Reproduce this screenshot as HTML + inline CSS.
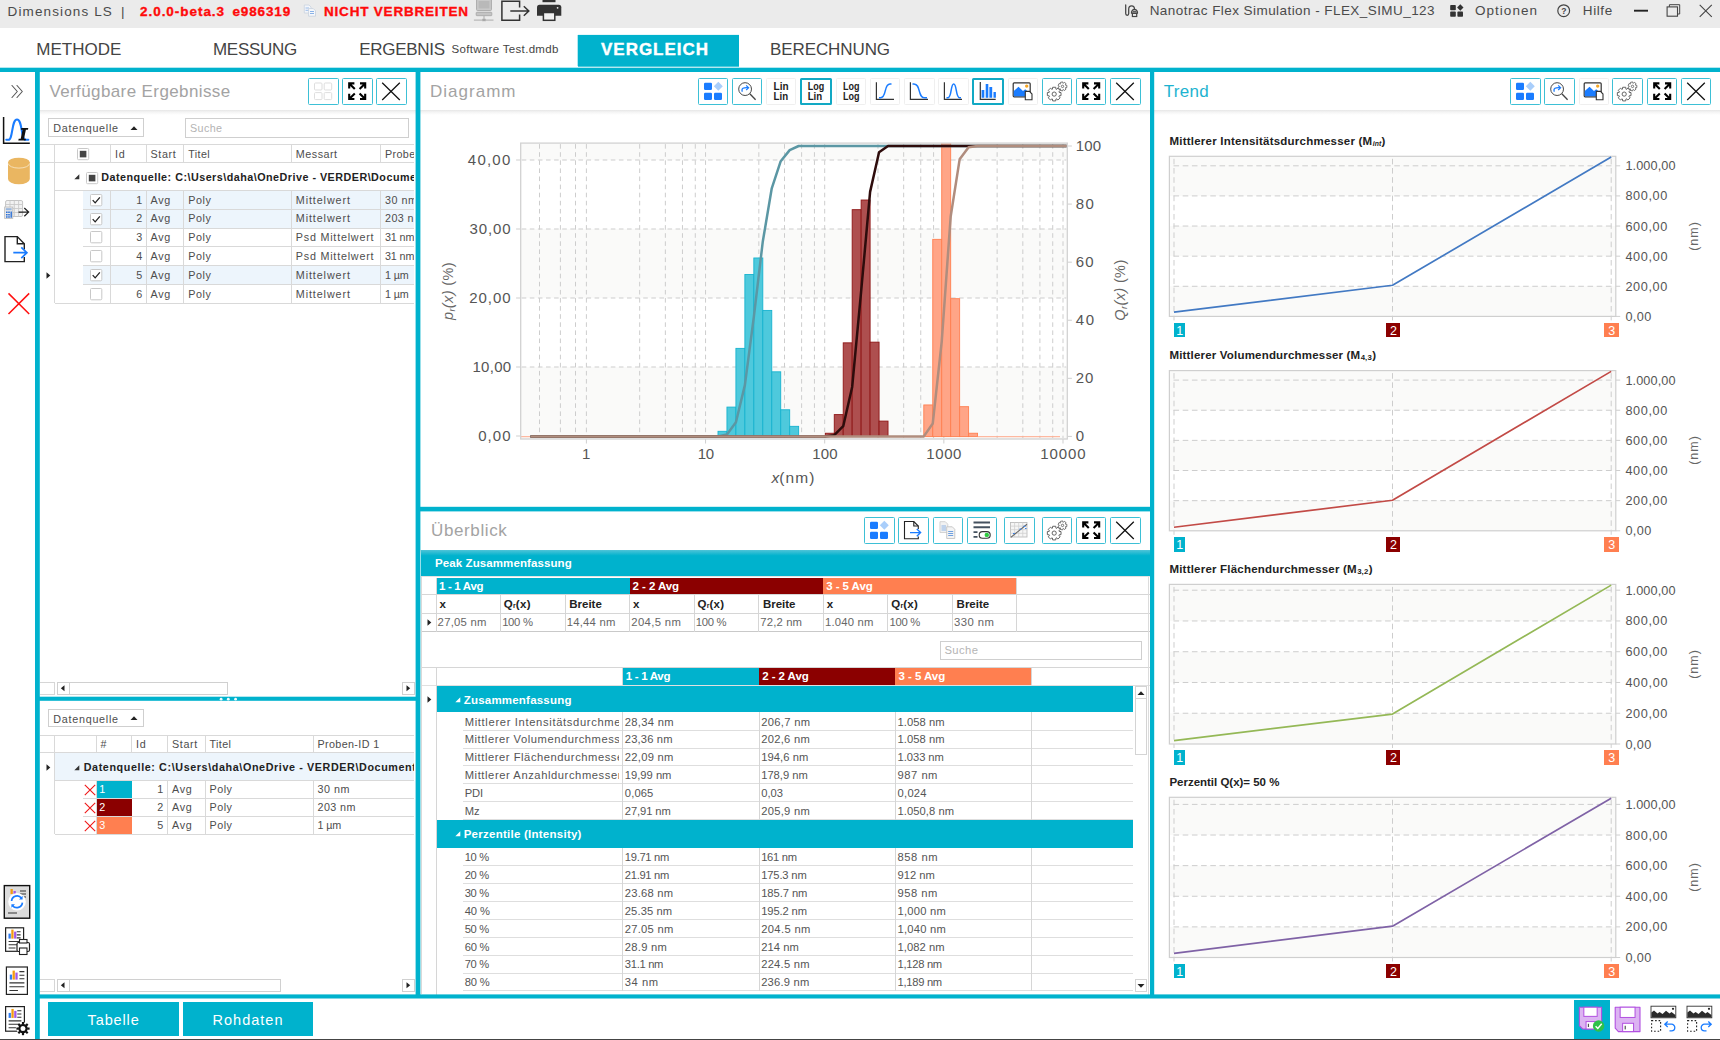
<!DOCTYPE html>
<html lang="de"><head><meta charset="utf-8"><title>Dimensions LS</title><style>
html,body{margin:0;padding:0;background:#fff;}
body{width:1720px;height:1040px;position:relative;overflow:hidden;font-family:"Liberation Sans",sans-serif;}
#app div,#app svg,#app span{position:absolute;box-sizing:border-box;}
#app .t{white-space:pre;line-height:0;}
#app svg{overflow:visible;}
#app svg text{font-family:"Liberation Sans",sans-serif;}
</style></head><body><div id="app" style="position:absolute;left:0;top:0;width:1720px;height:1040px;overflow:hidden">
<div style="left:0.00px;top:0.00px;width:1720.00px;height:28.00px;background:#ebebeb;"></div>
<span class="t" style="left:7.50px;top:12.00px;font-size:13.5px;color:#4a4a4a;letter-spacing:1.132px;">Dimensions LS</span>
<span class="t" style="left:121.00px;top:12.00px;font-size:13.5px;color:#4a4a4a;">|</span>
<span class="t" style="left:140.00px;top:12.00px;font-size:13.5px;color:#ff0a0a;letter-spacing:0.956px;font-weight:bold;-webkit-text-stroke:0.35px #ff0a0a;">2.0.0-beta.3</span>
<span class="t" style="left:232.50px;top:12.00px;font-size:13.5px;color:#ff0a0a;letter-spacing:0.850px;font-weight:bold;-webkit-text-stroke:0.35px #ff0a0a;">e986319</span>
<span class="t" style="left:324.00px;top:12.00px;font-size:13.5px;color:#ff0a0a;letter-spacing:0.799px;font-weight:bold;-webkit-text-stroke:0.35px #ff0a0a;">NICHT VERBREITEN</span>
<span class="t" style="left:1149.70px;top:11.00px;font-size:13.5px;color:#4a4a4a;letter-spacing:0.436px;">Nanotrac Flex Simulation - FLEX_SIMU_123</span>
<span class="t" style="left:1475.00px;top:11.00px;font-size:13.5px;color:#4a4a4a;letter-spacing:1.027px;">Optionen</span>
<span class="t" style="left:1582.80px;top:11.00px;font-size:13.5px;color:#4a4a4a;letter-spacing:0.599px;">Hilfe</span>
<div style="left:0.00px;top:28.00px;width:1720.00px;height:40.00px;background:#fff;"></div>
<div style="left:578px;top:35px;width:161px;height:31px;background:#00b2cd;"></div>
<div style="left:577px;top:35px;width:1px;height:31px;background:#00b2cd;opacity:0.30;"></div>
<div style="left:578px;top:34px;width:161px;height:1px;background:#00b2cd;opacity:0.10;"></div>
<div style="left:578px;top:66px;width:161px;height:1px;background:#00b2cd;opacity:0.70;"></div>
<span class="t" style="left:36.25px;top:50.00px;font-size:17px;color:#444;">METHODE</span>
<span class="t" style="left:213.00px;top:50.00px;font-size:17px;color:#444;letter-spacing:-0.300px;">MESSUNG</span>
<span class="t" style="left:359.25px;top:50.00px;font-size:17px;color:#444;letter-spacing:-0.300px;">ERGEBNIS</span>
<span class="t" style="left:451.50px;top:49.00px;font-size:11.5px;color:#444;letter-spacing:0.321px;">Software Test.dmdb</span>
<span class="t" style="left:601.00px;top:50.00px;font-size:17px;color:#fff;letter-spacing:0.980px;font-weight:bold;-webkit-text-stroke:0.4px #fff;">VERGLEICH</span>
<span class="t" style="left:770.00px;top:50.00px;font-size:17px;color:#444;letter-spacing:-0.090px;">BERECHNUNG</span>
<div style="left:0.00px;top:1039.00px;width:1720.00px;height:1.00px;background:#444;"></div>
<span class="t" style="left:49.40px;top:92.00px;font-size:17px;color:#a3a3a3;letter-spacing:0.394px;">Verfügbare Ergebnisse</span>
<div style="left:40.00px;top:110.20px;width:376.00px;height:5.00px;background:linear-gradient(#e6e6e6,#f4f4f4 40%,#fff);"></div>
<span class="t" style="left:430.00px;top:92.00px;font-size:17px;color:#a3a3a3;letter-spacing:1.013px;">Diagramm</span>
<div style="left:420.30px;top:110.20px;width:729.70px;height:5.00px;background:linear-gradient(#e6e6e6,#f4f4f4 40%,#fff);"></div>
<span class="t" style="left:1163.70px;top:92.00px;font-size:17px;color:#1db3d0;letter-spacing:0.305px;">Trend</span>
<div style="left:1154.20px;top:110.20px;width:565.80px;height:5.00px;background:linear-gradient(#e6e6e6,#f4f4f4 40%,#fff);"></div>
<span class="t" style="left:431.00px;top:531.00px;font-size:17px;color:#a3a3a3;letter-spacing:0.627px;">Überblick</span>
<div style="left:420.30px;top:549.60px;width:729.70px;height:5.00px;background:linear-gradient(#e6e6e6,#f4f4f4 40%,#fff);"></div>
<svg style="left:0.00px;top:76.00px;" width="36" height="250" viewBox="0 0 36 250">
<g fill="none" stroke="#555" stroke-width="1.1" stroke-linecap="round" stroke-linejoin="round">
<path d="M12 9.5 L17.3 15.5 L12 21.5"/><path d="M17 9.5 L22.3 15.5 L17 21.5"/>
</g>
<!-- chart icon -->
<path d="M3.6 41 V67.2 H29.8" fill="none" stroke="#111" stroke-width="1.5"/>
<path d="M6.3 63.7 H8.5 C13 63.7 11.5 43.5 17 43.5 C22.5 43.5 21 63.7 25.5 63.7 H28.3" fill="none" stroke="#1a7cff" stroke-width="2.1" stroke-linecap="round"/>
<path d="M21.3 52 h7 l-0.4 1.8 h-2 l-1.9 9 h2 l-0.4 1.8 h-7.3 l0.4 -1.8 h2 l1.9 -9 h-1.7 z" fill="#111"/>
<!-- cylinder -->
<path d="M8 86.5 V103 A10.9 5.2 0 0 0 29.8 103 V86.5 Z" fill="#eab661"/>
<ellipse cx="18.9" cy="86.5" rx="10.9" ry="4.8" fill="#eab661"/>
<path d="M8.3 87.5 A10.6 4.6 0 0 0 29.5 87.5" fill="none" stroke="#f6e3c0" stroke-width="0.9"/>
<!-- table export -->
<g stroke="#c4c4c4" stroke-width="1" fill="#f2f2f2"><rect x="5.6" y="124.5" width="17" height="16" rx="1.5"/></g>
<path d="M5.6 128.5 h17 M5.6 132.5 h17 M5.6 136.5 h17 M10 124.5 v16 M14.3 124.5 v16 M18.6 124.5 v16" stroke="#c9c9c9" stroke-width="0.9" fill="none"/>
<rect x="4.6" y="131" width="8.2" height="11.5" fill="#e8e8e8" stroke="#bdbdbd" stroke-width="0.8"/>
<path d="M6 135.5 h1.6 v1.6 h-1.6z M8.2 135.5 h1.6 v1.6 h-1.6z M6 138 h1.6 v1.6 h-1.6z M8.2 138 h1.6 v1.6 h-1.6z M6 140.3 h1.6 v1.4 h-1.6z M8.2 140.3 h1.6 v1.4 h-1.6z M10.5 135.5 h1.4 v6.2 h-1.4z" fill="#2a6fd6"/>
<rect x="5.8" y="132.2" width="5.8" height="2" fill="#9bb7dd"/>
<path d="M18.5 136.1 H28.3 M24.3 132 L28.6 136.1 L24.3 140.2" fill="none" stroke="#222" stroke-width="1.3"/>
<!-- doc arrow -->
<path d="M24.3 173.5 V167.8 L17.3 160.6 H5 V185.6 H24.3 V181" fill="none" stroke="#222" stroke-width="1.4"/>
<path d="M17.3 160.6 V167.8 H24.3" fill="none" stroke="#222" stroke-width="1.4"/>
<path d="M13.3 176.7 H26.6 M21.3 171.3 L26.9 176.7 L21.3 182.1" fill="none" stroke="#1a7cff" stroke-width="1.7"/>
<!-- red X -->
<path d="M8.5 217.4 L29.2 238 M29.2 217.4 L8.5 238" stroke="#ff1010" stroke-width="1.5" fill="none"/>
</svg>
<svg style="left:0.00px;top:880.00px;" width="36" height="160" viewBox="0 0 36 160"><rect x="4.3" y="5.6" width="25.4" height="32.6" fill="#dcdcdc" stroke="#111" stroke-width="1.4"/><rect x="10.5" y="9" width="2.3" height="5" fill="#f39c12"/><rect x="13.5" y="11" width="2.3" height="3" fill="#a259e6"/><path d="M20 11 H26 M20 14 H26 M20 17 H26 M8 33 H17" stroke="#333" stroke-width="1.1"/><circle cx="17" cy="21.8" r="8.8" fill="#fff"/><path d="M11.6 21 A5.5 5.5 0 0 1 21.5 18.2 M22.4 22.6 A5.5 5.5 0 0 1 12.5 25.4" fill="none" stroke="#1a7cff" stroke-width="1.7"/><path d="M22.6 15.8 v3.6 h-3.6 z M11.4 27.8 v-3.6 h3.6 z" fill="#1a7cff"/><rect x="5.6" y="47.8" width="18" height="23.5" fill="#fff" stroke="#222" stroke-width="1.2"/><rect x="8.48" y="53.61" width="2.3" height="5" fill="#2f7df6"/><rect x="11.280000000000001" y="49.61" width="2.3" height="9" fill="#f39c12"/><rect x="14.08" y="51.61" width="2.3" height="7" fill="#a259e6"/><path d="M16.759999999999998 51.794999999999995 H20.6 M16.759999999999998 54.849999999999994 H20.6 M16.759999999999998 57.905 H20.6 M8.6 61.42999999999999 H20.6 M8.6 64.72 H20.6 M8.6 68.00999999999999 H15.5" stroke="#333" stroke-width="1.1" fill="none"/><rect x="17" y="62.5" width="12.5" height="9" rx="1.5" fill="#fff" stroke="#222" stroke-width="1.2"/><rect x="19.5" y="59.5" width="7.5" height="3.5" fill="#fff" stroke="#222" stroke-width="1.1"/><rect x="19.5" y="68" width="7.5" height="6.5" fill="#fff" stroke="#222" stroke-width="1.1"/><rect x="6.4" y="87" width="21" height="27.4" fill="#fff" stroke="#222" stroke-width="1.2"/><rect x="9.76" y="94.604" width="2.3" height="5" fill="#2f7df6"/><rect x="12.559999999999999" y="90.604" width="2.3" height="9" fill="#f39c12"/><rect x="15.36" y="92.604" width="2.3" height="7" fill="#a259e6"/><path d="M19.42 91.658 H24.4 M19.42 95.22 H24.4 M19.42 98.782 H24.4 M9.4 102.892 H24.4 M9.4 106.728 H24.4 M9.4 110.564 H17.950000000000003" stroke="#333" stroke-width="1.1" fill="none"/><rect x="5.6" y="126.6" width="18.8" height="24.6" fill="#fff" stroke="#222" stroke-width="1.2"/><rect x="8.608" y="132.916" width="2.3" height="5" fill="#2f7df6"/><rect x="11.408000000000001" y="128.916" width="2.3" height="9" fill="#f39c12"/><rect x="14.208" y="130.916" width="2.3" height="7" fill="#a259e6"/><path d="M17.256 130.78199999999998 H21.4 M17.256 133.98 H21.4 M17.256 137.178 H21.4 M8.6 140.868 H21.4 M8.6 144.31199999999998 H21.4 M8.6 147.756 H15.940000000000001" stroke="#333" stroke-width="1.1" fill="none"/><circle cx="23" cy="148.6" r="6.4" fill="#fff"/><circle cx="23" cy="148.6" r="3.6" fill="none" stroke="#111" stroke-width="2.2"/><path d="M27.20 148.60 L29.60 148.60" stroke="#111" stroke-width="2.2"/><path d="M25.97 151.57 L27.67 153.27" stroke="#111" stroke-width="2.2"/><path d="M23.00 152.80 L23.00 155.20" stroke="#111" stroke-width="2.2"/><path d="M20.03 151.57 L18.33 153.27" stroke="#111" stroke-width="2.2"/><path d="M18.80 148.60 L16.40 148.60" stroke="#111" stroke-width="2.2"/><path d="M20.03 145.63 L18.33 143.93" stroke="#111" stroke-width="2.2"/><path d="M23.00 144.40 L23.00 142.00" stroke="#111" stroke-width="2.2"/><path d="M25.97 145.63 L27.67 143.93" stroke="#111" stroke-width="2.2"/></svg>
<div style="left:48.00px;top:118.00px;width:95.80px;height:19.40px;background:#fff;border:1px solid #cfcfcf;"></div>
<span class="t" style="left:53.30px;top:128.00px;font-size:10.75px;color:#4d4d4d;letter-spacing:0.739px;">Datenquelle</span>
<svg style="left:130.30px;top:124.70px;" width="8" height="6" viewBox="0 0 8 6"><path d="M0.5 5 L4 1.2 L7.5 5 Z" fill="#222"/></svg>
<div style="left:185.30px;top:118.00px;width:223.70px;height:19.60px;background:#fff;border:1px solid #cfcfcf;"></div>
<span class="t" style="left:190.00px;top:128.00px;font-size:10.75px;color:#b3b3b3;letter-spacing:0.404px;">Suche</span>
<div style="left:82.50px;top:190.30px;width:331.30px;height:18.90px;background:#edf5fc;"></div>
<div style="left:82.50px;top:209.20px;width:331.30px;height:18.80px;background:#edf5fc;"></div>
<div style="left:82.50px;top:265.50px;width:331.30px;height:18.80px;background:#edf5fc;"></div>
<div style="left:40.00px;top:143.90px;width:373.80px;height:1.00px;background:#d9d9d9;"></div>
<div style="left:40.00px;top:161.90px;width:373.80px;height:1.00px;background:#d9d9d9;"></div>
<div style="left:54.90px;top:189.80px;width:358.90px;height:1.00px;background:#d9d9d9;"></div>
<div style="left:82.50px;top:208.70px;width:331.30px;height:1.00px;background:#d9d9d9;"></div>
<div style="left:82.50px;top:227.50px;width:331.30px;height:1.00px;background:#d9d9d9;"></div>
<div style="left:82.50px;top:246.20px;width:331.30px;height:1.00px;background:#d9d9d9;"></div>
<div style="left:82.50px;top:265.00px;width:331.30px;height:1.00px;background:#d9d9d9;"></div>
<div style="left:82.50px;top:283.80px;width:331.30px;height:1.00px;background:#d9d9d9;"></div>
<div style="left:82.50px;top:302.60px;width:331.30px;height:1.00px;background:#d9d9d9;"></div>
<div style="left:54.90px;top:302.60px;width:358.90px;height:1.00px;background:#d9d9d9;"></div>
<div style="left:54.40px;top:144.40px;width:1.00px;height:158.70px;background:#d9d9d9;"></div>
<div style="left:109.80px;top:144.40px;width:1.00px;height:18.00px;background:#d9d9d9;"></div>
<div style="left:145.90px;top:144.40px;width:1.00px;height:18.00px;background:#d9d9d9;"></div>
<div style="left:183.40px;top:144.40px;width:1.00px;height:18.00px;background:#d9d9d9;"></div>
<div style="left:290.70px;top:144.40px;width:1.00px;height:18.00px;background:#d9d9d9;"></div>
<div style="left:379.90px;top:144.40px;width:1.00px;height:18.00px;background:#d9d9d9;"></div>
<div style="left:109.80px;top:190.30px;width:1.00px;height:112.80px;background:#d9d9d9;"></div>
<div style="left:145.90px;top:190.30px;width:1.00px;height:112.80px;background:#d9d9d9;"></div>
<div style="left:183.40px;top:190.30px;width:1.00px;height:112.80px;background:#d9d9d9;"></div>
<div style="left:290.70px;top:190.30px;width:1.00px;height:112.80px;background:#d9d9d9;"></div>
<div style="left:379.90px;top:190.30px;width:1.00px;height:112.80px;background:#d9d9d9;"></div>
<svg style="left:77.30px;top:148.00px;" width="12.2" height="12.2" viewBox="0 0 12.2 12.2"><rect x="0.5" y="0.5" width="11.2" height="11.2" rx="1" fill="#fff" stroke="#c8c8c8"/><rect x="2.806" y="2.806" width="6.588" height="6.588" fill="#444"/></svg>
<span class="t" style="left:114.90px;top:154.00px;font-size:10.75px;color:#4d4d4d;letter-spacing:0.768px;">Id</span>
<span class="t" style="left:150.50px;top:154.00px;font-size:10.75px;color:#4d4d4d;letter-spacing:0.620px;">Start</span>
<span class="t" style="left:188.30px;top:154.00px;font-size:10.75px;color:#4d4d4d;letter-spacing:0.378px;">Titel</span>
<span class="t" style="left:295.80px;top:154.00px;font-size:10.75px;color:#4d4d4d;letter-spacing:0.511px;">Messart</span>
<div style="left:380.4px;top:146px;width:33.4px;height:16px;overflow:hidden">
<span class="t" style="left:4.60px;top:8.00px;font-size:10.75px;color:#4d4d4d;letter-spacing:0.368px;">Proben-ID 1</span>
</div>
<svg style="left:73.70px;top:174.00px;" width="6" height="6" viewBox="0 0 6 6"><path d="M5.3 0.3 V5.3 H0.3 Z" fill="#333"/></svg>
<svg style="left:86.20px;top:171.50px;" width="12.2" height="12.2" viewBox="0 0 12.2 12.2"><rect x="0.5" y="0.5" width="11.2" height="11.2" rx="1" fill="#fff" stroke="#c8c8c8"/><rect x="2.806" y="2.806" width="6.588" height="6.588" fill="#444"/></svg>
<div style="left:100px;top:164px;width:313.8px;height:25px;overflow:hidden">
<span class="t" style="left:1.30px;top:13.00px;font-size:10.75px;color:#222;letter-spacing:0.487px;font-weight:bold;">Datenquelle: C:\Users\daha\OneDrive - VERDER\Documents\Dimensions</span>
</div>
<div style="left:380.4px;top:190px;width:33.4px;height:114px;overflow:hidden">
<span class="t" style="left:4.60px;top:10.00px;font-size:10.75px;color:#4d4d4d;letter-spacing:0.504px;">30 nm</span>
<span class="t" style="left:4.60px;top:28.00px;font-size:10.75px;color:#4d4d4d;letter-spacing:0.416px;">203 nm</span>
<span class="t" style="left:4.60px;top:47.00px;font-size:10.75px;color:#4d4d4d;letter-spacing:-0.117px;">31 nm</span>
<span class="t" style="left:4.60px;top:66.00px;font-size:10.75px;color:#4d4d4d;letter-spacing:-0.117px;">31 nm</span>
<span class="t" style="left:4.60px;top:85.00px;font-size:10.75px;color:#4d4d4d;letter-spacing:-0.151px;">1 µm</span>
<span class="t" style="left:4.60px;top:104.00px;font-size:10.75px;color:#4d4d4d;letter-spacing:-0.151px;">1 µm</span>
</div>
<svg style="left:89.50px;top:193.60px;" width="12.3" height="12.3" viewBox="0 0 12.3 12.3"><rect x="0.5" y="0.5" width="11.3" height="11.3" rx="1" fill="#fff" stroke="#c8c8c8"/><path d="M2.706 6.15 L5.166 8.856 L9.840000000000002 3.3210000000000006" fill="none" stroke="#222" stroke-width="1.3"/></svg>
<span class="t" style="left:136.32px;top:200.00px;font-size:10.75px;color:#4d4d4d;">1</span>
<span class="t" style="left:150.50px;top:200.00px;font-size:10.75px;color:#4d4d4d;letter-spacing:0.657px;">Avg</span>
<span class="t" style="left:188.30px;top:200.00px;font-size:10.75px;color:#4d4d4d;letter-spacing:0.522px;">Poly</span>
<span class="t" style="left:295.80px;top:200.00px;font-size:10.75px;color:#4d4d4d;letter-spacing:0.901px;">Mittelwert</span>
<svg style="left:89.50px;top:212.50px;" width="12.3" height="12.3" viewBox="0 0 12.3 12.3"><rect x="0.5" y="0.5" width="11.3" height="11.3" rx="1" fill="#fff" stroke="#c8c8c8"/><path d="M2.706 6.15 L5.166 8.856 L9.840000000000002 3.3210000000000006" fill="none" stroke="#222" stroke-width="1.3"/></svg>
<span class="t" style="left:136.32px;top:218.00px;font-size:10.75px;color:#4d4d4d;">2</span>
<span class="t" style="left:150.50px;top:218.00px;font-size:10.75px;color:#4d4d4d;letter-spacing:0.657px;">Avg</span>
<span class="t" style="left:188.30px;top:218.00px;font-size:10.75px;color:#4d4d4d;letter-spacing:0.522px;">Poly</span>
<span class="t" style="left:295.80px;top:218.00px;font-size:10.75px;color:#4d4d4d;letter-spacing:0.901px;">Mittelwert</span>
<svg style="left:89.50px;top:231.30px;" width="12.3" height="12.3" viewBox="0 0 12.3 12.3"><rect x="0.5" y="0.5" width="11.3" height="11.3" rx="1" fill="#fff" stroke="#c8c8c8"/></svg>
<span class="t" style="left:136.32px;top:237.00px;font-size:10.75px;color:#4d4d4d;">3</span>
<span class="t" style="left:150.50px;top:237.00px;font-size:10.75px;color:#4d4d4d;letter-spacing:0.657px;">Avg</span>
<span class="t" style="left:188.30px;top:237.00px;font-size:10.75px;color:#4d4d4d;letter-spacing:0.522px;">Poly</span>
<span class="t" style="left:295.80px;top:237.00px;font-size:10.75px;color:#4d4d4d;letter-spacing:0.786px;">Psd Mittelwert</span>
<svg style="left:89.50px;top:250.00px;" width="12.3" height="12.3" viewBox="0 0 12.3 12.3"><rect x="0.5" y="0.5" width="11.3" height="11.3" rx="1" fill="#fff" stroke="#c8c8c8"/></svg>
<span class="t" style="left:136.32px;top:256.00px;font-size:10.75px;color:#4d4d4d;">4</span>
<span class="t" style="left:150.50px;top:256.00px;font-size:10.75px;color:#4d4d4d;letter-spacing:0.657px;">Avg</span>
<span class="t" style="left:188.30px;top:256.00px;font-size:10.75px;color:#4d4d4d;letter-spacing:0.522px;">Poly</span>
<span class="t" style="left:295.80px;top:256.00px;font-size:10.75px;color:#4d4d4d;letter-spacing:0.786px;">Psd Mittelwert</span>
<svg style="left:89.50px;top:268.80px;" width="12.3" height="12.3" viewBox="0 0 12.3 12.3"><rect x="0.5" y="0.5" width="11.3" height="11.3" rx="1" fill="#fff" stroke="#c8c8c8"/><path d="M2.706 6.15 L5.166 8.856 L9.840000000000002 3.3210000000000006" fill="none" stroke="#222" stroke-width="1.3"/></svg>
<span class="t" style="left:136.32px;top:275.00px;font-size:10.75px;color:#4d4d4d;">5</span>
<span class="t" style="left:150.50px;top:275.00px;font-size:10.75px;color:#4d4d4d;letter-spacing:0.657px;">Avg</span>
<span class="t" style="left:188.30px;top:275.00px;font-size:10.75px;color:#4d4d4d;letter-spacing:0.522px;">Poly</span>
<span class="t" style="left:295.80px;top:275.00px;font-size:10.75px;color:#4d4d4d;letter-spacing:0.901px;">Mittelwert</span>
<svg style="left:89.50px;top:287.60px;" width="12.3" height="12.3" viewBox="0 0 12.3 12.3"><rect x="0.5" y="0.5" width="11.3" height="11.3" rx="1" fill="#fff" stroke="#c8c8c8"/></svg>
<span class="t" style="left:136.32px;top:294.00px;font-size:10.75px;color:#4d4d4d;">6</span>
<span class="t" style="left:150.50px;top:294.00px;font-size:10.75px;color:#4d4d4d;letter-spacing:0.657px;">Avg</span>
<span class="t" style="left:188.30px;top:294.00px;font-size:10.75px;color:#4d4d4d;letter-spacing:0.522px;">Poly</span>
<span class="t" style="left:295.80px;top:294.00px;font-size:10.75px;color:#4d4d4d;letter-spacing:0.901px;">Mittelwert</span>
<svg style="left:46.20px;top:271.80px;" width="5" height="7" viewBox="0 0 5 7"><path d="M0.5 0.3 L4.3 3.5 L0.5 6.7 Z" fill="#222"/></svg>
<div style="left:56.60px;top:682.00px;width:13.00px;height:13.00px;background:#fff;border:1px solid #d0d0d0;"></div>
<svg style="left:60.10px;top:685.30px;" width="5" height="7" viewBox="0 0 5 7"><path d="M4.5 0.3 V6.3 L0.8 3.3 Z" fill="#222"/></svg>
<div style="left:69.20px;top:682.00px;width:158.80px;height:13.00px;background:#fff;border:1px solid #d0d0d0;"></div>
<div style="left:401.70px;top:682.00px;width:13.00px;height:13.00px;background:#fff;border:1px solid #d0d0d0;"></div>
<svg style="left:406.20px;top:685.30px;" width="5" height="7" viewBox="0 0 5 7"><path d="M0.5 0.3 V6.3 L4.2 3.3 Z" fill="#222"/></svg>
<div style="left:40.00px;top:682.00px;width:15.30px;height:13.00px;background:#fff;border:1px solid #d6d6d6;border-left:none;"></div>
<div style="left:48.00px;top:709.40px;width:95.60px;height:17.80px;background:#fff;border:1px solid #cfcfcf;"></div>
<span class="t" style="left:53.30px;top:719.00px;font-size:10.75px;color:#4d4d4d;letter-spacing:0.739px;">Datenquelle</span>
<svg style="left:130.10px;top:715.30px;" width="8" height="6" viewBox="0 0 8 6"><path d="M0.5 5 L4 1.2 L7.5 5 Z" fill="#222"/></svg>
<div style="left:54.80px;top:752.40px;width:359.00px;height:28.20px;background:#edf5fc;"></div>
<div style="left:40.00px;top:735.10px;width:373.80px;height:1.00px;background:#d9d9d9;"></div>
<div style="left:40.00px;top:751.90px;width:373.80px;height:1.00px;background:#d9d9d9;"></div>
<div style="left:54.80px;top:780.10px;width:359.00px;height:1.00px;background:#d9d9d9;"></div>
<div style="left:82.60px;top:798.10px;width:331.20px;height:1.00px;background:#d9d9d9;"></div>
<div style="left:82.60px;top:816.00px;width:331.20px;height:1.00px;background:#d9d9d9;"></div>
<div style="left:54.80px;top:833.90px;width:359.00px;height:1.00px;background:#d9d9d9;"></div>
<div style="left:54.30px;top:735.60px;width:1.00px;height:98.80px;background:#d9d9d9;"></div>
<div style="left:95.70px;top:735.60px;width:1.00px;height:16.80px;background:#d9d9d9;"></div>
<div style="left:131.00px;top:735.60px;width:1.00px;height:16.80px;background:#d9d9d9;"></div>
<div style="left:166.80px;top:735.60px;width:1.00px;height:16.80px;background:#d9d9d9;"></div>
<div style="left:205.20px;top:735.60px;width:1.00px;height:16.80px;background:#d9d9d9;"></div>
<div style="left:312.70px;top:735.60px;width:1.00px;height:16.80px;background:#d9d9d9;"></div>
<div style="left:95.70px;top:780.60px;width:1.00px;height:53.80px;background:#d9d9d9;"></div>
<div style="left:131.00px;top:780.60px;width:1.00px;height:53.80px;background:#d9d9d9;"></div>
<div style="left:166.80px;top:780.60px;width:1.00px;height:53.80px;background:#d9d9d9;"></div>
<div style="left:205.20px;top:780.60px;width:1.00px;height:53.80px;background:#d9d9d9;"></div>
<div style="left:312.70px;top:780.60px;width:1.00px;height:53.80px;background:#d9d9d9;"></div>
<span class="t" style="left:100.50px;top:744.00px;font-size:10.75px;color:#4d4d4d;">#</span>
<span class="t" style="left:136.00px;top:744.00px;font-size:10.75px;color:#4d4d4d;letter-spacing:0.768px;">Id</span>
<span class="t" style="left:172.00px;top:744.00px;font-size:10.75px;color:#4d4d4d;letter-spacing:0.620px;">Start</span>
<span class="t" style="left:209.50px;top:744.00px;font-size:10.75px;color:#4d4d4d;letter-spacing:0.378px;">Titel</span>
<span class="t" style="left:317.50px;top:744.00px;font-size:10.75px;color:#4d4d4d;letter-spacing:0.368px;">Proben-ID 1</span>
<svg style="left:46.20px;top:763.50px;" width="5" height="7" viewBox="0 0 5 7"><path d="M0.5 0.3 L4.3 3.5 L0.5 6.7 Z" fill="#222"/></svg>
<svg style="left:73.50px;top:764.70px;" width="6" height="6" viewBox="0 0 6 6"><path d="M5.3 0.3 V5.3 H0.3 Z" fill="#333"/></svg>
<div style="left:82px;top:754px;width:331.8px;height:25px;overflow:hidden">
<span class="t" style="left:1.70px;top:13.00px;font-size:10.75px;color:#222;letter-spacing:0.610px;font-weight:bold;">Datenquelle: C:\Users\daha\OneDrive - VERDER\Documents\Dimensions</span>
</div>
<div style="left:96.50px;top:780.90px;width:35.00px;height:17.40px;background:#00b2cd;"></div>
<span class="t" style="left:99.20px;top:789.00px;font-size:10.75px;color:#fff;">1</span>
<svg style="left:83.50px;top:783.80px;" width="12" height="12" viewBox="0 0 12 12"><path d="M0.8 0.8 L11.2 11.2 M11.2 0.8 L0.8 11.2" stroke="#f01818" stroke-width="1.1" fill="none"/></svg>
<span class="t" style="left:157.32px;top:789.00px;font-size:10.75px;color:#4d4d4d;">1</span>
<span class="t" style="left:172.00px;top:789.00px;font-size:10.75px;color:#4d4d4d;letter-spacing:0.657px;">Avg</span>
<span class="t" style="left:209.50px;top:789.00px;font-size:10.75px;color:#4d4d4d;letter-spacing:0.522px;">Poly</span>
<span class="t" style="left:317.50px;top:789.00px;font-size:10.75px;color:#4d4d4d;letter-spacing:0.504px;">30 nm</span>
<div style="left:96.50px;top:798.90px;width:35.00px;height:17.30px;background:#8b0000;"></div>
<span class="t" style="left:99.20px;top:807.00px;font-size:10.75px;color:#fff;">2</span>
<svg style="left:83.50px;top:801.80px;" width="12" height="12" viewBox="0 0 12 12"><path d="M0.8 0.8 L11.2 11.2 M11.2 0.8 L0.8 11.2" stroke="#f01818" stroke-width="1.1" fill="none"/></svg>
<span class="t" style="left:157.32px;top:807.00px;font-size:10.75px;color:#4d4d4d;">2</span>
<span class="t" style="left:172.00px;top:807.00px;font-size:10.75px;color:#4d4d4d;letter-spacing:0.657px;">Avg</span>
<span class="t" style="left:209.50px;top:807.00px;font-size:10.75px;color:#4d4d4d;letter-spacing:0.522px;">Poly</span>
<span class="t" style="left:317.50px;top:807.00px;font-size:10.75px;color:#4d4d4d;letter-spacing:0.416px;">203 nm</span>
<div style="left:96.50px;top:816.80px;width:35.00px;height:17.30px;background:#ff7f50;"></div>
<span class="t" style="left:99.20px;top:825.00px;font-size:10.75px;color:#fff;">3</span>
<svg style="left:83.50px;top:819.70px;" width="12" height="12" viewBox="0 0 12 12"><path d="M0.8 0.8 L11.2 11.2 M11.2 0.8 L0.8 11.2" stroke="#f01818" stroke-width="1.1" fill="none"/></svg>
<span class="t" style="left:157.32px;top:825.00px;font-size:10.75px;color:#4d4d4d;">5</span>
<span class="t" style="left:172.00px;top:825.00px;font-size:10.75px;color:#4d4d4d;letter-spacing:0.657px;">Avg</span>
<span class="t" style="left:209.50px;top:825.00px;font-size:10.75px;color:#4d4d4d;letter-spacing:0.522px;">Poly</span>
<span class="t" style="left:317.50px;top:825.00px;font-size:10.75px;color:#4d4d4d;letter-spacing:-0.151px;">1 µm</span>
<div style="left:56.60px;top:978.70px;width:13.00px;height:13.00px;background:#fff;border:1px solid #d0d0d0;"></div>
<svg style="left:60.10px;top:982.00px;" width="5" height="7" viewBox="0 0 5 7"><path d="M4.5 0.3 V6.3 L0.8 3.3 Z" fill="#222"/></svg>
<div style="left:69.20px;top:978.70px;width:212.30px;height:13.00px;background:#fff;border:1px solid #d0d0d0;"></div>
<div style="left:401.70px;top:978.70px;width:13.00px;height:13.00px;background:#fff;border:1px solid #d0d0d0;"></div>
<svg style="left:406.20px;top:982.00px;" width="5" height="7" viewBox="0 0 5 7"><path d="M0.5 0.3 V6.3 L4.2 3.3 Z" fill="#222"/></svg>
<div style="left:40.00px;top:978.70px;width:15.30px;height:13.00px;background:#fff;border:1px solid #d6d6d6;border-left:none;"></div>
<div style="left:48.20px;top:1002.30px;width:130.80px;height:33.30px;background:#00b2cd;"></div>
<div style="left:182.70px;top:1002.30px;width:130.80px;height:33.30px;background:#00b2cd;"></div>
<span class="t" style="left:87.60px;top:1020.00px;font-size:14.5px;color:#fff;letter-spacing:0.865px;">Tabelle</span>
<span class="t" style="left:212.50px;top:1020.00px;font-size:14.5px;color:#fff;letter-spacing:1.015px;">Rohdaten</span>
<div style="left:308.20px;top:78.00px;width:30.60px;height:26.50px;background:#fff;border:1.3px solid #3dc0d6;border-radius:1.5px;"></div>
<svg style="left:308.20px;top:78.00px;" width="30.4" height="26.5" viewBox="0 0 30.4 26.5"><g fill="none" stroke="#dedede" stroke-width="1"><rect x="6.5" y="5" width="7.5" height="7" rx="1"/><rect x="6.5" y="14.6" width="7.5" height="7" rx="1"/><rect x="16.2" y="14.6" width="7.5" height="7" rx="1"/><rect x="16.2" y="5" width="7.5" height="7" rx="1"/></g></svg>
<div style="left:342.30px;top:78.00px;width:30.60px;height:26.50px;background:#fff;border:1.3px solid #3dc0d6;border-radius:1.5px;"></div>
<svg style="left:342.30px;top:78.00px;" width="30.4" height="26.5" viewBox="0 0 30.4 26.5"><path d="M12.4 5.4 H7.2 V10.600000000000001 M7.2 5.4 L12.8 10.9" fill="none" stroke="#000" stroke-width="2.1" stroke-linejoin="miter"/><path d="M18.0 5.4 H23.2 V10.600000000000001 M23.2 5.4 L17.6 10.9" fill="none" stroke="#000" stroke-width="2.1" stroke-linejoin="miter"/><path d="M12.4 21.0 H7.2 V15.8 M7.2 21.0 L12.8 15.5" fill="none" stroke="#000" stroke-width="2.1" stroke-linejoin="miter"/><path d="M18.0 21.0 H23.2 V15.8 M23.2 21.0 L17.6 15.5" fill="none" stroke="#000" stroke-width="2.1" stroke-linejoin="miter"/></svg>
<div style="left:376.40px;top:78.00px;width:30.60px;height:26.50px;background:#fff;border:1.3px solid #3dc0d6;border-radius:1.5px;"></div>
<svg style="left:376.40px;top:78.00px;" width="30.4" height="26.5" viewBox="0 0 30.4 26.5"><path d="M6.2 4.7 L23.8 22 M23.8 4.7 L6.2 22" fill="none" stroke="#111" stroke-width="1.25"/></svg>
<div style="left:698.00px;top:78.10px;width:30.40px;height:26.50px;background:#fff;border:1.3px solid #3dc0d6;border-radius:1.5px;"></div>
<svg style="left:698.00px;top:78.10px;" width="30.4" height="26.5" viewBox="0 0 30.4 26.5"><rect x="6" y="4.7" width="8" height="7.2" rx="1.2" fill="#1a7cff"/><rect x="6" y="14.7" width="8" height="7.3" rx="1.2" fill="#1a7cff"/><rect x="16" y="14.7" width="8" height="7.3" rx="1.2" fill="#1a7cff"/><path d="M20.3 3.8 L24.8 8.3 L20.3 12.8 L15.8 8.3 Z" fill="#a9cefb"/></svg>
<div style="left:732.00px;top:78.10px;width:30.40px;height:26.50px;background:#fff;border:1.3px solid #3dc0d6;border-radius:1.5px;"></div>
<svg style="left:732.00px;top:78.10px;" width="30.4" height="26.5" viewBox="0 0 30.4 26.5"><circle cx="13.1" cy="11.1" r="6.4" fill="none" stroke="#444" stroke-width="1"/><path d="M17.8 15.8 L23.6 21.8" stroke="#444" stroke-width="1.3"/><path d="M10.3 13.8 C9 10.5 11.5 9.3 16 9.6" fill="none" stroke="#1a7cff" stroke-width="1.2"/><path d="M14.2 7.4 L16.6 9.7 L14.2 12" fill="none" stroke="#1a7cff" stroke-width="1.2"/></svg>
<div style="left:766.00px;top:78.10px;width:30.40px;height:26.50px;background:#fff;border:1px solid #efefef;border-radius:1.5px;"></div>
<svg style="left:766.00px;top:78.10px;" width="30.4" height="26.5" viewBox="0 0 30.4 26.5"><text x="7.6" y="11.9" font-size="10" font-weight="bold" fill="#222" textLength="15" lengthAdjust="spacingAndGlyphs">Lin</text><text x="7.6" y="21.7" font-size="10" font-weight="bold" fill="#222" textLength="14.5" lengthAdjust="spacingAndGlyphs">Lin</text></svg>
<div style="left:800.20px;top:78.10px;width:31.60px;height:26.50px;background:#fff;border:2.2px solid #12a9c4;border-radius:1.5px;"></div>
<svg style="left:800.20px;top:78.10px;" width="30.4" height="26.5" viewBox="0 0 30.4 26.5"><text x="7.7" y="11.9" font-size="10" font-weight="bold" fill="#222" textLength="16.5" lengthAdjust="spacingAndGlyphs">Log</text><text x="7.7" y="21.7" font-size="10" font-weight="bold" fill="#222" textLength="14.5" lengthAdjust="spacingAndGlyphs">Lin</text></svg>
<div style="left:835.60px;top:78.10px;width:30.40px;height:26.50px;background:#fff;border:1px solid #efefef;border-radius:1.5px;"></div>
<svg style="left:835.60px;top:78.10px;" width="30.4" height="26.5" viewBox="0 0 30.4 26.5"><text x="7.0" y="11.9" font-size="10" font-weight="bold" fill="#222" textLength="16.5" lengthAdjust="spacingAndGlyphs">Log</text><text x="7.0" y="21.7" font-size="10" font-weight="bold" fill="#222" textLength="16.5" lengthAdjust="spacingAndGlyphs">Log</text></svg>
<div style="left:869.90px;top:78.10px;width:30.40px;height:26.50px;background:#fff;border:1px solid #efefef;border-radius:1.5px;"></div>
<svg style="left:869.90px;top:78.10px;" width="30.4" height="26.5" viewBox="0 0 30.4 26.5"><path d="M6.4 4.3 V21.3 H24" fill="none" stroke="#333" stroke-width="1.2"/><path d="M9 19.7 H10.5 C17 19.7 13.5 6 20 6 H21.5" fill="none" stroke="#1a7cff" stroke-width="1.5"/></svg>
<div style="left:904.20px;top:78.10px;width:30.40px;height:26.50px;background:#fff;border:1px solid #efefef;border-radius:1.5px;"></div>
<svg style="left:904.20px;top:78.10px;" width="30.4" height="26.5" viewBox="0 0 30.4 26.5"><path d="M6.4 4.3 V21.3 H24" fill="none" stroke="#333" stroke-width="1.2"/><path d="M8.5 6 H10 C17 6 13.5 19.7 20.5 19.7 H23" fill="none" stroke="#1a7cff" stroke-width="1.5"/></svg>
<div style="left:938.30px;top:78.10px;width:30.40px;height:26.50px;background:#fff;border:1px solid #efefef;border-radius:1.5px;"></div>
<svg style="left:938.30px;top:78.10px;" width="30.4" height="26.5" viewBox="0 0 30.4 26.5"><path d="M6.4 4.3 V21.3 H24" fill="none" stroke="#333" stroke-width="1.2"/><path d="M8.5 19.7 H10 C13.8 19.7 12.5 6 15.7 6 C19 6 17.6 19.7 21.5 19.7 H23" fill="none" stroke="#1a7cff" stroke-width="1.5"/></svg>
<div style="left:972.30px;top:78.10px;width:31.60px;height:26.50px;background:#fff;border:2.2px solid #12a9c4;border-radius:1.5px;"></div>
<svg style="left:972.30px;top:78.10px;" width="30.4" height="26.5" viewBox="0 0 30.4 26.5"><path d="M8.3 4 V21.3 H23.7" fill="none" stroke="#333" stroke-width="1.2"/><path d="M9.6 11.9 h2.7 V19.7 h-2.7z M13.7 6.1 h2.6 V19.7 h-2.6z M17.4 8.9 h2.8 V19.7 h-2.8z M21.5 13.9 h2.4 V19.7 h-2.4z" fill="#1a7cff"/></svg>
<div style="left:1008.00px;top:78.10px;width:30.40px;height:26.50px;background:#fff;border:1px solid #efefef;border-radius:1.5px;"></div>
<svg style="left:1008.00px;top:78.10px;" width="30.4" height="26.5" viewBox="0 0 30.4 26.5"><rect x="5.2" y="4.8" width="17" height="14" rx="1" fill="#fff" stroke="#333" stroke-width="1.2"/><path d="M5.8 17.6 V13 L10.5 8.8 L15 13 L17.2 11.2 L21.6 15 V18.2 H5.8 Z" fill="#1a7cff"/><circle cx="18.7" cy="8.1" r="1.7" fill="#f5a623"/><path d="M17.3 13.4 H21.5 L24 16 V21.7 H17.3 Z" fill="#fff" stroke="#333" stroke-width="1.1"/></svg>
<div style="left:1041.80px;top:78.10px;width:30.40px;height:26.50px;background:#fff;border:1.3px solid #3dc0d6;border-radius:1.5px;"></div>
<svg style="left:1041.80px;top:78.10px;" width="30.4" height="26.5" viewBox="0 0 30.4 26.5"><path d="M17.09 14.34 L19.03 14.57 L19.03 17.63 L17.09 17.86 L16.91 18.31 L18.11 19.85 L15.95 22.01 L14.41 20.81 L13.96 20.99 L13.73 22.93 L10.67 22.93 L10.44 20.99 L9.99 20.81 L8.45 22.01 L6.29 19.85 L7.49 18.31 L7.31 17.86 L5.37 17.63 L5.37 14.57 L7.31 14.34 L7.49 13.89 L6.29 12.35 L8.45 10.19 L9.99 11.39 L10.44 11.21 L10.67 9.27 L13.73 9.27 L13.96 11.21 L14.41 11.39 L15.95 10.19 L18.11 12.35 L16.91 13.89 Z" fill="#fff" stroke="#555" stroke-width="0.9" stroke-linejoin="round"/><circle cx="12.2" cy="16.1" r="2.1" fill="#fff" stroke="#555" stroke-width="0.9"/><path d="M23.45 7.17 L24.86 7.28 L24.86 9.52 L23.45 9.63 L23.30 9.94 L24.09 11.11 L22.34 12.51 L21.38 11.48 L21.04 11.55 L20.62 12.90 L18.44 12.40 L18.64 11.01 L18.37 10.79 L17.06 11.30 L16.09 9.28 L17.30 8.57 L17.30 8.23 L16.09 7.52 L17.06 5.50 L18.37 6.01 L18.64 5.79 L18.44 4.40 L20.62 3.90 L21.04 5.25 L21.38 5.32 L22.34 4.29 L24.09 5.69 L23.30 6.86 Z" fill="#fff" stroke="#555" stroke-width="0.8" stroke-linejoin="round"/><circle cx="20.5" cy="8.4" r="1.2" fill="#fff" stroke="#555" stroke-width="0.8"/></svg>
<div style="left:1076.00px;top:78.10px;width:30.40px;height:26.50px;background:#fff;border:1.3px solid #3dc0d6;border-radius:1.5px;"></div>
<svg style="left:1076.00px;top:78.10px;" width="30.4" height="26.5" viewBox="0 0 30.4 26.5"><path d="M12.4 5.4 H7.2 V10.600000000000001 M7.2 5.4 L12.8 10.9" fill="none" stroke="#000" stroke-width="2.1" stroke-linejoin="miter"/><path d="M18.0 5.4 H23.2 V10.600000000000001 M23.2 5.4 L17.6 10.9" fill="none" stroke="#000" stroke-width="2.1" stroke-linejoin="miter"/><path d="M12.4 21.0 H7.2 V15.8 M7.2 21.0 L12.8 15.5" fill="none" stroke="#000" stroke-width="2.1" stroke-linejoin="miter"/><path d="M18.0 21.0 H23.2 V15.8 M23.2 21.0 L17.6 15.5" fill="none" stroke="#000" stroke-width="2.1" stroke-linejoin="miter"/></svg>
<div style="left:1110.20px;top:78.10px;width:30.40px;height:26.50px;background:#fff;border:1.3px solid #3dc0d6;border-radius:1.5px;"></div>
<svg style="left:1110.20px;top:78.10px;" width="30.4" height="26.5" viewBox="0 0 30.4 26.5"><path d="M6.2 4.7 L23.8 22 M23.8 4.7 L6.2 22" fill="none" stroke="#111" stroke-width="1.25"/></svg>
<div style="left:1510.30px;top:78.10px;width:30.40px;height:26.50px;background:#fff;border:1.3px solid #3dc0d6;border-radius:1.5px;"></div>
<svg style="left:1510.30px;top:78.10px;" width="30.4" height="26.5" viewBox="0 0 30.4 26.5"><rect x="6" y="4.7" width="8" height="7.2" rx="1.2" fill="#1a7cff"/><rect x="6" y="14.7" width="8" height="7.3" rx="1.2" fill="#1a7cff"/><rect x="16" y="14.7" width="8" height="7.3" rx="1.2" fill="#1a7cff"/><path d="M20.3 3.8 L24.8 8.3 L20.3 12.8 L15.8 8.3 Z" fill="#a9cefb"/></svg>
<div style="left:1544.40px;top:78.10px;width:30.40px;height:26.50px;background:#fff;border:1.3px solid #3dc0d6;border-radius:1.5px;"></div>
<svg style="left:1544.40px;top:78.10px;" width="30.4" height="26.5" viewBox="0 0 30.4 26.5"><circle cx="13.1" cy="11.1" r="6.4" fill="none" stroke="#444" stroke-width="1"/><path d="M17.8 15.8 L23.6 21.8" stroke="#444" stroke-width="1.3"/><path d="M10.3 13.8 C9 10.5 11.5 9.3 16 9.6" fill="none" stroke="#1a7cff" stroke-width="1.2"/><path d="M14.2 7.4 L16.6 9.7 L14.2 12" fill="none" stroke="#1a7cff" stroke-width="1.2"/></svg>
<div style="left:1578.50px;top:78.10px;width:30.40px;height:26.50px;background:#fff;border:1px solid #efefef;border-radius:1.5px;"></div>
<svg style="left:1578.50px;top:78.10px;" width="30.4" height="26.5" viewBox="0 0 30.4 26.5"><rect x="5.2" y="4.8" width="17" height="14" rx="1" fill="#fff" stroke="#333" stroke-width="1.2"/><path d="M5.8 17.6 V13 L10.5 8.8 L15 13 L17.2 11.2 L21.6 15 V18.2 H5.8 Z" fill="#1a7cff"/><circle cx="18.7" cy="8.1" r="1.7" fill="#f5a623"/><path d="M17.3 13.4 H21.5 L24 16 V21.7 H17.3 Z" fill="#fff" stroke="#333" stroke-width="1.1"/></svg>
<div style="left:1612.20px;top:78.10px;width:30.40px;height:26.50px;background:#fff;border:1.3px solid #3dc0d6;border-radius:1.5px;"></div>
<svg style="left:1612.20px;top:78.10px;" width="30.4" height="26.5" viewBox="0 0 30.4 26.5"><path d="M17.09 14.34 L19.03 14.57 L19.03 17.63 L17.09 17.86 L16.91 18.31 L18.11 19.85 L15.95 22.01 L14.41 20.81 L13.96 20.99 L13.73 22.93 L10.67 22.93 L10.44 20.99 L9.99 20.81 L8.45 22.01 L6.29 19.85 L7.49 18.31 L7.31 17.86 L5.37 17.63 L5.37 14.57 L7.31 14.34 L7.49 13.89 L6.29 12.35 L8.45 10.19 L9.99 11.39 L10.44 11.21 L10.67 9.27 L13.73 9.27 L13.96 11.21 L14.41 11.39 L15.95 10.19 L18.11 12.35 L16.91 13.89 Z" fill="#fff" stroke="#555" stroke-width="0.9" stroke-linejoin="round"/><circle cx="12.2" cy="16.1" r="2.1" fill="#fff" stroke="#555" stroke-width="0.9"/><path d="M23.45 7.17 L24.86 7.28 L24.86 9.52 L23.45 9.63 L23.30 9.94 L24.09 11.11 L22.34 12.51 L21.38 11.48 L21.04 11.55 L20.62 12.90 L18.44 12.40 L18.64 11.01 L18.37 10.79 L17.06 11.30 L16.09 9.28 L17.30 8.57 L17.30 8.23 L16.09 7.52 L17.06 5.50 L18.37 6.01 L18.64 5.79 L18.44 4.40 L20.62 3.90 L21.04 5.25 L21.38 5.32 L22.34 4.29 L24.09 5.69 L23.30 6.86 Z" fill="#fff" stroke="#555" stroke-width="0.8" stroke-linejoin="round"/><circle cx="20.5" cy="8.4" r="1.2" fill="#fff" stroke="#555" stroke-width="0.8"/></svg>
<div style="left:1646.50px;top:78.10px;width:30.40px;height:26.50px;background:#fff;border:1.3px solid #3dc0d6;border-radius:1.5px;"></div>
<svg style="left:1646.50px;top:78.10px;" width="30.4" height="26.5" viewBox="0 0 30.4 26.5"><path d="M12.4 5.4 H7.2 V10.600000000000001 M7.2 5.4 L12.8 10.9" fill="none" stroke="#000" stroke-width="2.1" stroke-linejoin="miter"/><path d="M18.0 5.4 H23.2 V10.600000000000001 M23.2 5.4 L17.6 10.9" fill="none" stroke="#000" stroke-width="2.1" stroke-linejoin="miter"/><path d="M12.4 21.0 H7.2 V15.8 M7.2 21.0 L12.8 15.5" fill="none" stroke="#000" stroke-width="2.1" stroke-linejoin="miter"/><path d="M18.0 21.0 H23.2 V15.8 M23.2 21.0 L17.6 15.5" fill="none" stroke="#000" stroke-width="2.1" stroke-linejoin="miter"/></svg>
<div style="left:1680.60px;top:78.10px;width:30.40px;height:26.50px;background:#fff;border:1.3px solid #3dc0d6;border-radius:1.5px;"></div>
<svg style="left:1680.60px;top:78.10px;" width="30.4" height="26.5" viewBox="0 0 30.4 26.5"><path d="M6.2 4.7 L23.8 22 M23.8 4.7 L6.2 22" fill="none" stroke="#111" stroke-width="1.25"/></svg>
<div style="left:864.40px;top:517.20px;width:30.40px;height:26.80px;background:#fff;border:1.3px solid #3dc0d6;border-radius:1.5px;"></div>
<svg style="left:864.40px;top:517.20px;" width="30.4" height="26.5" viewBox="0 0 30.4 26.5"><rect x="6" y="4.7" width="8" height="7.2" rx="1.2" fill="#1a7cff"/><rect x="6" y="14.7" width="8" height="7.3" rx="1.2" fill="#1a7cff"/><rect x="16" y="14.7" width="8" height="7.3" rx="1.2" fill="#1a7cff"/><path d="M20.3 3.8 L24.8 8.3 L20.3 12.8 L15.8 8.3 Z" fill="#a9cefb"/></svg>
<div style="left:898.40px;top:517.20px;width:30.40px;height:26.80px;background:#fff;border:1.3px solid #3dc0d6;border-radius:1.5px;"></div>
<svg style="left:898.40px;top:517.20px;" width="30.4" height="26.5" viewBox="0 0 30.4 26.5"><path d="M20.3 12 V9 L15.8 4.5 H6.5 V21.7 H20.3 V19.5" fill="none" stroke="#222" stroke-width="1.1"/><path d="M15.8 4.5 V9 H20.3" fill="none" stroke="#222" stroke-width="1.1"/><path d="M12 15.6 H22.4 M18.8 12 L22.6 15.6 L18.8 19.2" fill="none" stroke="#1a7cff" stroke-width="1.4"/></svg>
<div style="left:932.50px;top:517.20px;width:30.40px;height:26.80px;background:#fff;border:1.3px solid #3dc0d6;border-radius:1.5px;"></div>
<svg style="left:932.50px;top:517.20px;" width="30.4" height="26.5" viewBox="0 0 30.4 26.5"><path d="M7 4.7 H12.3 L14.8 7.2 V15.5 H7 Z" fill="#f2f2f2" stroke="#cfcfcf" stroke-width="0.9"/><path d="M8.5 9 h4.5 M8.5 11 h4.5 M8.5 13 h4.5" stroke="#8eb4e6" stroke-width="1"/><path d="M13.7 9.8 H19.3 L21.8 12.3 V21.5 H13.7 Z" fill="#f4f4f4" stroke="#c4c4c4" stroke-width="0.9"/><path d="M15.2 14.5 h5 M15.2 16.5 h5 M15.2 18.5 h5" stroke="#6d9fe0" stroke-width="1"/></svg>
<div style="left:966.50px;top:517.20px;width:30.40px;height:26.80px;background:#fff;border:1.3px solid #3dc0d6;border-radius:1.5px;"></div>
<svg style="left:966.50px;top:517.20px;" width="30.4" height="26.5" viewBox="0 0 30.4 26.5"><path d="M6.5 5.5 H23 M6.5 10.3 H23 M6.5 15.1 H10.5 M6.5 19.9 H10.5" stroke="#44515f" stroke-width="1.9" fill="none"/><rect x="12.2" y="14.6" width="11" height="6.6" rx="3.3" fill="#fff" stroke="#333" stroke-width="1.1"/><circle cx="19.8" cy="17.9" r="2.2" fill="#2ecc40"/></svg>
<div style="left:1004.30px;top:517.20px;width:30.40px;height:26.80px;background:#fff;border:1.3px solid #3dc0d6;border-radius:1.5px;"></div>
<svg style="left:1004.30px;top:517.20px;" width="30.4" height="26.5" viewBox="0 0 30.4 26.5"><rect x="6.5" y="5.5" width="16.5" height="14.5" fill="#f6f6f6" stroke="#bdbdbd" stroke-width="0.9"/><path d="M6.5 9.1 h16.5 M6.5 12.7 h16.5 M6.5 16.3 h16.5 M10.6 5.5 v14.5 M14.7 5.5 v14.5 M18.8 5.5 v14.5" stroke="#cfcfcf" stroke-width="0.8"/><path d="M6.8 20.4 L23 7.2" stroke="#666" stroke-width="1.1"/><path d="M9 16.5 h1.8 M15.5 12.2 h1.8 M19.5 9.3 h1.8 M21 11.5 h1.5" stroke="#3b82e8" stroke-width="1.2"/></svg>
<div style="left:1042.00px;top:517.20px;width:30.40px;height:26.80px;background:#fff;border:1.3px solid #3dc0d6;border-radius:1.5px;"></div>
<svg style="left:1042.00px;top:517.20px;" width="30.4" height="26.5" viewBox="0 0 30.4 26.5"><path d="M17.09 14.34 L19.03 14.57 L19.03 17.63 L17.09 17.86 L16.91 18.31 L18.11 19.85 L15.95 22.01 L14.41 20.81 L13.96 20.99 L13.73 22.93 L10.67 22.93 L10.44 20.99 L9.99 20.81 L8.45 22.01 L6.29 19.85 L7.49 18.31 L7.31 17.86 L5.37 17.63 L5.37 14.57 L7.31 14.34 L7.49 13.89 L6.29 12.35 L8.45 10.19 L9.99 11.39 L10.44 11.21 L10.67 9.27 L13.73 9.27 L13.96 11.21 L14.41 11.39 L15.95 10.19 L18.11 12.35 L16.91 13.89 Z" fill="#fff" stroke="#555" stroke-width="0.9" stroke-linejoin="round"/><circle cx="12.2" cy="16.1" r="2.1" fill="#fff" stroke="#555" stroke-width="0.9"/><path d="M23.45 7.17 L24.86 7.28 L24.86 9.52 L23.45 9.63 L23.30 9.94 L24.09 11.11 L22.34 12.51 L21.38 11.48 L21.04 11.55 L20.62 12.90 L18.44 12.40 L18.64 11.01 L18.37 10.79 L17.06 11.30 L16.09 9.28 L17.30 8.57 L17.30 8.23 L16.09 7.52 L17.06 5.50 L18.37 6.01 L18.64 5.79 L18.44 4.40 L20.62 3.90 L21.04 5.25 L21.38 5.32 L22.34 4.29 L24.09 5.69 L23.30 6.86 Z" fill="#fff" stroke="#555" stroke-width="0.8" stroke-linejoin="round"/><circle cx="20.5" cy="8.4" r="1.2" fill="#fff" stroke="#555" stroke-width="0.8"/></svg>
<div style="left:1076.00px;top:517.20px;width:30.40px;height:26.80px;background:#fff;border:1.3px solid #3dc0d6;border-radius:1.5px;"></div>
<svg style="left:1076.00px;top:517.20px;" width="30.4" height="26.5" viewBox="0 0 30.4 26.5"><path d="M12.4 5.4 H7.2 V10.600000000000001 M7.2 5.4 L12.8 10.9" fill="none" stroke="#000" stroke-width="2.1" stroke-linejoin="miter"/><path d="M18.0 5.4 H23.2 V10.600000000000001 M23.2 5.4 L17.6 10.9" fill="none" stroke="#000" stroke-width="2.1" stroke-linejoin="miter"/><path d="M12.4 21.0 H7.2 V15.8 M7.2 21.0 L12.8 15.5" fill="none" stroke="#000" stroke-width="2.1" stroke-linejoin="miter"/><path d="M18.0 21.0 H23.2 V15.8 M23.2 21.0 L17.6 15.5" fill="none" stroke="#000" stroke-width="2.1" stroke-linejoin="miter"/></svg>
<div style="left:1110.20px;top:517.20px;width:30.40px;height:26.80px;background:#fff;border:1.3px solid #3dc0d6;border-radius:1.5px;"></div>
<svg style="left:1110.20px;top:517.20px;" width="30.4" height="26.5" viewBox="0 0 30.4 26.5"><path d="M6.2 4.7 L23.8 22 M23.8 4.7 L6.2 22" fill="none" stroke="#111" stroke-width="1.25"/></svg>
<svg style="left:0.00px;top:0.00px;" width="1720" height="520" viewBox="0 0 1720 520"><rect x="520.7" y="143.1" width="546.5999999999999" height="295.9" fill="#fff"/><rect x="520.7" y="143.10" width="546.5999999999999" height="16.90" fill="#fafaf9"/><rect x="520.7" y="229.00" width="546.5999999999999" height="69.00" fill="#fafaf9"/><rect x="520.7" y="367.00" width="546.5999999999999" height="72.00" fill="#fafaf9"/><path d="M539.50 144.1 V438.0 M560.40 144.1 V438.0 M575.50 144.1 V438.0 M586.40 144.1 V438.0 M639.68 144.1 V438.0 M665.37 144.1 V438.0 M682.46 144.1 V438.0 M695.28 144.1 V438.0 M705.55 144.1 V438.0 M758.83 144.1 V438.0 M784.52 144.1 V438.0 M801.61 144.1 V438.0 M814.43 144.1 V438.0 M824.70 144.1 V438.0 M877.98 144.1 V438.0 M903.67 144.1 V438.0 M920.76 144.1 V438.0 M933.58 144.1 V438.0 M943.85 144.1 V438.0 M997.13 144.1 V438.0 M1022.82 144.1 V438.0 M1039.91 144.1 V438.0 M1052.73 144.1 V438.0 M1063.00 144.1 V438.0 " stroke="#cdcdcd" stroke-width="1" stroke-dasharray="4.6 3.5" fill="none"/><path d="M521.7 367.00 H1066.3 M521.7 298.00 H1066.3 M521.7 229.00 H1066.3 M521.7 160.00 H1066.3 " stroke="#cdcdcd" stroke-width="1" stroke-dasharray="4.6 3.5" fill="none"/><path d="M516.1 436.00 H520.7 M516.1 367.00 H520.7 M516.1 298.00 H520.7 M516.1 229.00 H520.7 M516.1 160.00 H520.7 M1067.3 436.40 H1071.8999999999999 M1067.3 378.32 H1071.8999999999999 M1067.3 320.24 H1071.8999999999999 M1067.3 262.16 H1071.8999999999999 M1067.3 204.08 H1071.8999999999999 M1067.3 146.00 H1071.8999999999999 M586.40 439.0 V443.5 M705.55 439.0 V443.5 M824.70 439.0 V443.5 M943.85 439.0 V443.5 M1063.00 439.0 V443.5 " stroke="#cfcfcf" stroke-width="1" fill="none"/><clipPath id="pc"><rect x="520.7" y="143.1" width="546.5999999999999" height="295.9"/></clipPath><g clip-path="url(#pc)"><rect x="718.00" y="431.31" width="8.96" height="5.29" fill="#4ec9dc" stroke="#16b3cf" stroke-width="0.9"/><rect x="726.96" y="407.09" width="8.96" height="29.51" fill="#4ec9dc" stroke="#16b3cf" stroke-width="0.9"/><rect x="735.92" y="348.37" width="8.96" height="88.23" fill="#4ec9dc" stroke="#16b3cf" stroke-width="0.9"/><rect x="744.88" y="274.54" width="8.96" height="162.06" fill="#4ec9dc" stroke="#16b3cf" stroke-width="0.9"/><rect x="753.84" y="257.98" width="8.96" height="178.62" fill="#4ec9dc" stroke="#16b3cf" stroke-width="0.9"/><rect x="762.80" y="310.42" width="8.96" height="126.18" fill="#4ec9dc" stroke="#16b3cf" stroke-width="0.9"/><rect x="771.76" y="371.83" width="8.96" height="64.77" fill="#4ec9dc" stroke="#16b3cf" stroke-width="0.9"/><rect x="780.72" y="409.78" width="8.96" height="26.82" fill="#4ec9dc" stroke="#16b3cf" stroke-width="0.9"/><rect x="789.68" y="426.34" width="8.96" height="10.26" fill="#4ec9dc" stroke="#16b3cf" stroke-width="0.9"/><rect x="825.30" y="433.24" width="8.96" height="3.36" fill="#ae4f4f" stroke="#8e1515" stroke-width="0.9"/><rect x="834.26" y="414.61" width="8.96" height="21.99" fill="#ae4f4f" stroke="#8e1515" stroke-width="0.9"/><rect x="843.22" y="342.85" width="8.96" height="93.75" fill="#ae4f4f" stroke="#8e1515" stroke-width="0.9"/><rect x="852.18" y="209.68" width="8.96" height="226.92" fill="#ae4f4f" stroke="#8e1515" stroke-width="0.9"/><rect x="861.14" y="200.02" width="8.96" height="236.58" fill="#ae4f4f" stroke="#8e1515" stroke-width="0.9"/><rect x="870.10" y="342.16" width="8.96" height="94.44" fill="#ae4f4f" stroke="#8e1515" stroke-width="0.9"/><rect x="879.06" y="421.10" width="8.96" height="15.50" fill="#ae4f4f" stroke="#8e1515" stroke-width="0.9"/><rect x="923.80" y="404.95" width="8.96" height="31.65" fill="#ffa587" stroke="#ff7f50" stroke-width="0.9"/><rect x="932.76" y="239.35" width="8.96" height="197.25" fill="#ffa587" stroke="#ff7f50" stroke-width="0.9"/><rect x="941.72" y="135.85" width="8.96" height="300.75" fill="#ffa587" stroke="#ff7f50" stroke-width="0.9"/><rect x="950.68" y="298.69" width="8.96" height="137.91" fill="#ffa587" stroke="#ff7f50" stroke-width="0.9"/><rect x="959.64" y="406.68" width="8.96" height="29.93" fill="#ffa587" stroke="#ff7f50" stroke-width="0.9"/><rect x="968.60" y="433.24" width="8.96" height="3.36" fill="#ffa587" stroke="#ff7f50" stroke-width="0.9"/><path d="M520.7 436.7 H531 M977.6 436.7 H1060" stroke="#ffa98c" stroke-width="1"/></g><path d="M530.50 436.40 L718.00 436.40 L726.96 434.41 L735.92 422.18 L744.88 385.10 L753.84 316.79 L762.80 241.47 L771.76 188.33 L780.72 161.18 L789.68 150.09 L798.64 146.00 L1066.80 146.00" fill="none" stroke="#5b97a4" stroke-width="2.5" stroke-linejoin="round"/><path d="M530.50 436.40 L825.30 436.40 L834.26 435.24 L843.22 426.21 L852.18 386.91 L861.14 291.43 L870.10 191.88 L879.06 152.29 L888.02 146.00 L1066.80 146.00" fill="none" stroke="#2e0c0c" stroke-width="2.5" stroke-linejoin="round"/><path d="M530.50 436.40 L923.80 436.40 L932.76 423.47 L941.72 341.56 L950.68 216.55 L959.64 159.36 L968.60 147.15 L977.56 146.00 L1066.80 146.00" fill="none" stroke="#b08d7e" stroke-width="2.5" stroke-linejoin="round"/><rect x="520.7" y="143.1" width="546.5999999999999" height="295.9" fill="none" stroke="#d2d2d2" stroke-width="1.3"/></svg>
<span class="t" style="left:478.19px;top:436.00px;font-size:15px;color:#555;letter-spacing:1.029px;">0,00</span>
<span class="t" style="left:472.46px;top:367.00px;font-size:15px;color:#555;letter-spacing:0.301px;">10,00</span>
<span class="t" style="left:469.33px;top:298.00px;font-size:15px;color:#555;letter-spacing:0.927px;">20,00</span>
<span class="t" style="left:469.38px;top:229.00px;font-size:15px;color:#555;letter-spacing:0.918px;">30,00</span>
<span class="t" style="left:467.83px;top:160.00px;font-size:15px;color:#555;letter-spacing:1.228px;">40,00</span>
<span class="t" style="left:1075.80px;top:436.00px;font-size:15px;color:#555;letter-spacing:1.010px;">0</span>
<span class="t" style="left:1075.80px;top:378.00px;font-size:15px;color:#555;letter-spacing:0.765px;">20</span>
<span class="t" style="left:1075.80px;top:320.00px;font-size:15px;color:#555;letter-spacing:1.517px;">40</span>
<span class="t" style="left:1075.80px;top:262.00px;font-size:15px;color:#555;letter-spacing:1.099px;">60</span>
<span class="t" style="left:1075.80px;top:204.00px;font-size:15px;color:#555;letter-spacing:1.282px;">80</span>
<span class="t" style="left:1075.80px;top:146.00px;font-size:15px;color:#555;letter-spacing:0.136px;">100</span>
<span class="t" style="left:581.88px;top:454.00px;font-size:15px;color:#555;letter-spacing:-0.300px;">1</span>
<span class="t" style="left:697.81px;top:454.00px;font-size:15px;color:#555;letter-spacing:-0.300px;">10</span>
<span class="t" style="left:812.28px;top:454.00px;font-size:15px;color:#555;letter-spacing:0.136px;">100</span>
<span class="t" style="left:926.26px;top:454.00px;font-size:15px;color:#555;letter-spacing:0.605px;">1000</span>
<span class="t" style="left:1040.23px;top:454.00px;font-size:15px;color:#555;letter-spacing:0.886px;">10000</span>
<span class="t" style="left:771.5px;top:473px;font-size:15.5px;color:#555;line-height:0;top:478px"><i>x</i><span style="position:static;letter-spacing:1.1px">(nm)</span></span>
<div style="left:447.7px;top:290.6px;width:0;height:0;transform:rotate(-90deg)"><span class="t" style="left:-40px;width:80px;text-align:center;top:0;font-size:14.5px;color:#666;letter-spacing:0.38px"><i>p<span style="position:static;font-size:9px;vertical-align:-2px">r</span>(x)</i> (%)</span></div>
<div style="left:1120.4px;top:290.3px;width:0;height:0;transform:rotate(-90deg)"><span class="t" style="left:-40px;width:80px;text-align:center;top:0;font-size:14.5px;color:#666;letter-spacing:0.38px"><i>Q<span style="position:static;font-size:9px;vertical-align:-2px">r</span>(x)</i> (%)</span></div>
<div style="left:420.50px;top:549.70px;width:1.00px;height:444.80px;background:#d9d9d9;"></div>
<div style="left:421.30px;top:549.70px;width:728.30px;height:26.20px;background:linear-gradient(#4fc4d8 0%,#00b2cd 22%,#00b2cd 100%);"></div>
<span class="t" style="left:435.00px;top:563.00px;font-size:11.5px;color:#fff;letter-spacing:0.098px;font-weight:bold;">Peak Zusammenfassung</span>
<div style="left:436.00px;top:577.80px;width:193.65px;height:16.20px;background:#00b2cd;"></div>
<div style="left:629.65px;top:577.80px;width:193.65px;height:16.20px;background:#8b0000;"></div>
<div style="left:823.30px;top:577.80px;width:193.65px;height:16.20px;background:#ff7f50;"></div>
<div style="left:421.50px;top:576.40px;width:728.10px;height:1.00px;background:#e2e2e2;"></div>
<div style="left:421.50px;top:593.80px;width:728.10px;height:1.00px;background:#d6d6d6;"></div>
<div style="left:421.50px;top:612.60px;width:728.10px;height:1.00px;background:#d6d6d6;"></div>
<div style="left:421.50px;top:630.90px;width:728.10px;height:1.60px;background:#c9c9c9;"></div>
<div style="left:435.50px;top:594.30px;width:1.00px;height:37.40px;background:#d6d6d6;"></div>
<div style="left:500.05px;top:594.30px;width:1.00px;height:37.40px;background:#d6d6d6;"></div>
<div style="left:564.60px;top:594.30px;width:1.00px;height:37.40px;background:#d6d6d6;"></div>
<div style="left:629.15px;top:594.30px;width:1.00px;height:37.40px;background:#d6d6d6;"></div>
<div style="left:693.70px;top:594.30px;width:1.00px;height:37.40px;background:#d6d6d6;"></div>
<div style="left:758.25px;top:594.30px;width:1.00px;height:37.40px;background:#d6d6d6;"></div>
<div style="left:822.80px;top:594.30px;width:1.00px;height:37.40px;background:#d6d6d6;"></div>
<div style="left:887.35px;top:594.30px;width:1.00px;height:37.40px;background:#d6d6d6;"></div>
<div style="left:951.90px;top:594.30px;width:1.00px;height:37.40px;background:#d6d6d6;"></div>
<div style="left:1016.45px;top:594.30px;width:1.00px;height:37.40px;background:#d6d6d6;"></div>
<div style="left:435.50px;top:577.80px;width:1.00px;height:16.50px;background:#d6d6d6;"></div>
<div style="left:1016.45px;top:577.80px;width:1.00px;height:16.50px;background:#d6d6d6;"></div>
<span class="t" style="left:438.90px;top:586.00px;font-size:11.5px;color:#fff;letter-spacing:-0.300px;font-weight:bold;">1 - 1 Avg</span>
<span class="t" style="left:632.55px;top:586.00px;font-size:11.5px;color:#fff;letter-spacing:-0.064px;font-weight:bold;">2 - 2 Avg</span>
<span class="t" style="left:826.20px;top:586.00px;font-size:11.5px;color:#fff;letter-spacing:-0.064px;font-weight:bold;">3 - 5 Avg</span>
<span class="t" style="left:439.40px;top:604.00px;font-size:11.5px;color:#222;font-weight:bold;">x</span>
<span class="t" style="left:437.60px;top:622.00px;font-size:11.3px;color:#666;letter-spacing:0.257px;">27,05 nm</span>
<span class="t" style="left:503.85px;top:604px;font-size:11.5px;font-weight:bold;color:#222;letter-spacing:0.3px">Q<span style="position:static;font-size:7px;letter-spacing:0">r</span>(x)</span>
<span class="t" style="left:502.15px;top:622.00px;font-size:11.3px;color:#666;letter-spacing:-0.300px;">100 %</span>
<span class="t" style="left:569.30px;top:604.00px;font-size:11.5px;color:#222;letter-spacing:-0.016px;font-weight:bold;">Breite</span>
<span class="t" style="left:566.70px;top:622.00px;font-size:11.3px;color:#666;letter-spacing:0.221px;">14,44 nm</span>
<span class="t" style="left:633.05px;top:604.00px;font-size:11.5px;color:#222;font-weight:bold;">x</span>
<span class="t" style="left:631.25px;top:622.00px;font-size:11.3px;color:#666;letter-spacing:0.365px;">204,5 nm</span>
<span class="t" style="left:697.50px;top:604px;font-size:11.5px;font-weight:bold;color:#222;letter-spacing:0.3px">Q<span style="position:static;font-size:7px;letter-spacing:0">r</span>(x)</span>
<span class="t" style="left:695.80px;top:622.00px;font-size:11.3px;color:#666;letter-spacing:-0.300px;">100 %</span>
<span class="t" style="left:762.95px;top:604.00px;font-size:11.5px;color:#222;letter-spacing:-0.016px;font-weight:bold;">Breite</span>
<span class="t" style="left:760.35px;top:622.00px;font-size:11.3px;color:#666;letter-spacing:0.144px;">72,2 nm</span>
<span class="t" style="left:826.70px;top:604.00px;font-size:11.5px;color:#222;font-weight:bold;">x</span>
<span class="t" style="left:824.90px;top:622.00px;font-size:11.3px;color:#666;letter-spacing:0.218px;">1.040 nm</span>
<span class="t" style="left:891.15px;top:604px;font-size:11.5px;font-weight:bold;color:#222;letter-spacing:0.3px">Q<span style="position:static;font-size:7px;letter-spacing:0">r</span>(x)</span>
<span class="t" style="left:889.45px;top:622.00px;font-size:11.3px;color:#666;letter-spacing:-0.300px;">100 %</span>
<span class="t" style="left:956.60px;top:604.00px;font-size:11.5px;color:#222;letter-spacing:-0.016px;font-weight:bold;">Breite</span>
<span class="t" style="left:954.00px;top:622.00px;font-size:11.3px;color:#666;letter-spacing:0.440px;">330 nm</span>
<svg style="left:426.80px;top:619.00px;" width="5" height="7" viewBox="0 0 5 7"><path d="M0.5 0.3 L4.3 3.5 L0.5 6.7 Z" fill="#222"/></svg>
<div style="left:940.10px;top:640.70px;width:201.80px;height:19.00px;background:#fff;border:1px solid #cfcfcf;"></div>
<span class="t" style="left:944.40px;top:650.00px;font-size:11.25px;color:#b5b5b5;letter-spacing:0.421px;">Suche</span>
<div style="left:421.50px;top:666.50px;width:728.10px;height:1.00px;background:#d6d6d6;"></div>
<div style="left:622.60px;top:668.00px;width:136.40px;height:16.70px;background:#00b2cd;"></div>
<div style="left:759.00px;top:668.00px;width:136.40px;height:16.70px;background:#8b0000;"></div>
<div style="left:895.40px;top:668.00px;width:136.40px;height:16.70px;background:#ff7f50;"></div>
<div style="left:421.50px;top:684.80px;width:728.10px;height:1.00px;background:#e0e0e0;"></div>
<div style="left:435.50px;top:667.00px;width:1.00px;height:327.50px;background:#d6d6d6;"></div>
<div style="left:622.10px;top:667.00px;width:1.00px;height:18.30px;background:#d6d6d6;"></div>
<div style="left:1031.30px;top:667.00px;width:1.00px;height:18.30px;background:#d6d6d6;"></div>
<span class="t" style="left:625.80px;top:676.00px;font-size:11.5px;color:#fff;letter-spacing:-0.300px;font-weight:bold;">1 - 1 Avg</span>
<span class="t" style="left:762.20px;top:676.00px;font-size:11.5px;color:#fff;letter-spacing:-0.064px;font-weight:bold;">2 - 2 Avg</span>
<span class="t" style="left:898.60px;top:676.00px;font-size:11.5px;color:#fff;letter-spacing:-0.064px;font-weight:bold;">3 - 5 Avg</span>
<div style="left:436.50px;top:686.30px;width:696.70px;height:26.00px;background:#00b2cd;"></div>
<svg style="left:454.60px;top:696.70px;" width="6" height="6" viewBox="0 0 6 6"><path d="M5.3 0.3 V5.3 H0.3 Z" fill="#fff"/></svg>
<span class="t" style="left:463.70px;top:700.00px;font-size:11.5px;color:#fff;letter-spacing:0.214px;font-weight:bold;">Zusammenfassung</span>
<svg style="left:426.80px;top:696.30px;" width="5" height="7" viewBox="0 0 5 7"><path d="M0.5 0.3 L4.3 3.5 L0.5 6.7 Z" fill="#222"/></svg>
<div style="left:463px;top:712px;width:155.6px;height:19px;overflow:hidden">
<span class="t" style="left:1.70px;top:10.00px;font-size:11.2px;color:#555;letter-spacing:0.661px;">Mittlerer Intensitätsdurchmesser</span>
</div>
<span class="t" style="left:624.80px;top:722.00px;font-size:11.2px;color:#555;letter-spacing:0.315px;">28,34 nm</span>
<span class="t" style="left:761.20px;top:722.00px;font-size:11.2px;color:#555;letter-spacing:0.309px;">206,7 nm</span>
<span class="t" style="left:897.60px;top:722.00px;font-size:11.2px;color:#555;letter-spacing:0.046px;">1.058 nm</span>
<div style="left:463.00px;top:729.67px;width:670.20px;height:1.00px;background:#dedede;"></div>
<div style="left:463px;top:730px;width:155.6px;height:19px;overflow:hidden">
<span class="t" style="left:1.70px;top:9.00px;font-size:11.2px;color:#555;letter-spacing:0.540px;">Mittlerer Volumendurchmesser</span>
</div>
<span class="t" style="left:624.80px;top:739.00px;font-size:11.2px;color:#555;letter-spacing:0.147px;">23,36 nm</span>
<span class="t" style="left:761.20px;top:739.00px;font-size:11.2px;color:#555;letter-spacing:0.285px;">202,6 nm</span>
<span class="t" style="left:897.60px;top:739.00px;font-size:11.2px;color:#555;letter-spacing:0.046px;">1.058 nm</span>
<div style="left:463.00px;top:747.54px;width:670.20px;height:1.00px;background:#dedede;"></div>
<div style="left:463px;top:748px;width:155.6px;height:19px;overflow:hidden">
<span class="t" style="left:1.70px;top:9.00px;font-size:11.2px;color:#555;letter-spacing:0.549px;">Mittlerer Flächendurchmesser</span>
</div>
<span class="t" style="left:624.80px;top:757.00px;font-size:11.2px;color:#555;letter-spacing:0.285px;">22,09 nm</span>
<span class="t" style="left:761.20px;top:757.00px;font-size:11.2px;color:#555;letter-spacing:0.071px;">194,6 nm</span>
<span class="t" style="left:897.60px;top:757.00px;font-size:11.2px;color:#555;letter-spacing:-0.055px;">1.033 nm</span>
<div style="left:463.00px;top:765.41px;width:670.20px;height:1.00px;background:#dedede;"></div>
<div style="left:463px;top:765px;width:155.6px;height:19px;overflow:hidden">
<span class="t" style="left:1.70px;top:10.00px;font-size:11.2px;color:#555;letter-spacing:0.577px;">Mittlerer Anzahldurchmesser</span>
</div>
<span class="t" style="left:624.80px;top:775.00px;font-size:11.2px;color:#555;">19,99 nm</span>
<span class="t" style="left:761.20px;top:775.00px;font-size:11.2px;color:#555;letter-spacing:-0.005px;">178,9 nm</span>
<span class="t" style="left:897.60px;top:775.00px;font-size:11.2px;color:#555;letter-spacing:0.502px;">987 nm</span>
<div style="left:463.00px;top:783.28px;width:670.20px;height:1.00px;background:#dedede;"></div>
<div style="left:463px;top:783px;width:155.6px;height:19px;overflow:hidden">
<span class="t" style="left:1.70px;top:10.00px;font-size:11.2px;color:#555;letter-spacing:-0.057px;">PDI</span>
</div>
<span class="t" style="left:624.80px;top:793.00px;font-size:11.2px;color:#555;letter-spacing:0.128px;">0,065</span>
<span class="t" style="left:761.20px;top:793.00px;font-size:11.2px;color:#555;letter-spacing:0.036px;">0,03</span>
<span class="t" style="left:897.60px;top:793.00px;font-size:11.2px;color:#555;letter-spacing:0.241px;">0,024</span>
<div style="left:463.00px;top:801.15px;width:670.20px;height:1.00px;background:#dedede;"></div>
<div style="left:463px;top:801px;width:155.6px;height:19px;overflow:hidden">
<span class="t" style="left:1.70px;top:10.00px;font-size:11.2px;color:#555;letter-spacing:-0.015px;">Mz</span>
</div>
<span class="t" style="left:624.80px;top:811.00px;font-size:11.2px;color:#555;letter-spacing:-0.095px;">27,91 nm</span>
<span class="t" style="left:761.20px;top:811.00px;font-size:11.2px;color:#555;letter-spacing:0.288px;">205,9 nm</span>
<span class="t" style="left:897.60px;top:811.00px;font-size:11.2px;color:#555;letter-spacing:0.055px;">1.050,8 nm</span>
<div style="left:463.00px;top:819.02px;width:670.20px;height:1.00px;background:#dedede;"></div>
<div style="left:622.10px;top:712.30px;width:1.00px;height:107.22px;background:#d6d6d6;"></div>
<div style="left:758.50px;top:712.30px;width:1.00px;height:107.22px;background:#d6d6d6;"></div>
<div style="left:894.90px;top:712.30px;width:1.00px;height:107.22px;background:#d6d6d6;"></div>
<div style="left:1031.30px;top:712.30px;width:1.00px;height:107.22px;background:#d6d6d6;"></div>
<div style="left:436.50px;top:819.82px;width:696.70px;height:28.00px;background:#00b2cd;"></div>
<svg style="left:454.60px;top:831.32px;" width="6" height="6" viewBox="0 0 6 6"><path d="M5.3 0.3 V5.3 H0.3 Z" fill="#fff"/></svg>
<span class="t" style="left:463.70px;top:834.00px;font-size:11.5px;color:#fff;letter-spacing:0.252px;font-weight:bold;">Perzentile (Intensity)</span>
<div style="left:463px;top:848px;width:155.6px;height:19px;overflow:hidden">
<span class="t" style="left:1.70px;top:9.00px;font-size:11.2px;color:#555;letter-spacing:-0.300px;">10 %</span>
</div>
<span class="t" style="left:624.80px;top:857.00px;font-size:11.2px;color:#555;letter-spacing:-0.300px;">19.71 nm</span>
<span class="t" style="left:761.20px;top:857.00px;font-size:11.2px;color:#555;letter-spacing:-0.300px;">161 nm</span>
<span class="t" style="left:897.60px;top:857.00px;font-size:11.2px;color:#555;letter-spacing:0.517px;">858 nm</span>
<div style="left:463.00px;top:865.39px;width:670.20px;height:1.00px;background:#dedede;"></div>
<div style="left:463px;top:865px;width:155.6px;height:19px;overflow:hidden">
<span class="t" style="left:1.70px;top:10.00px;font-size:11.2px;color:#555;letter-spacing:-0.300px;">20 %</span>
</div>
<span class="t" style="left:624.80px;top:875.00px;font-size:11.2px;color:#555;letter-spacing:-0.300px;">21.91 nm</span>
<span class="t" style="left:761.20px;top:875.00px;font-size:11.2px;color:#555;letter-spacing:-0.155px;">175.3 nm</span>
<span class="t" style="left:897.60px;top:875.00px;font-size:11.2px;color:#555;letter-spacing:-0.015px;">912 nm</span>
<div style="left:463.00px;top:883.26px;width:670.20px;height:1.00px;background:#dedede;"></div>
<div style="left:463px;top:883px;width:155.6px;height:19px;overflow:hidden">
<span class="t" style="left:1.70px;top:10.00px;font-size:11.2px;color:#555;letter-spacing:-0.300px;">30 %</span>
</div>
<span class="t" style="left:624.80px;top:893.00px;font-size:11.2px;color:#555;letter-spacing:0.241px;">23.68 nm</span>
<span class="t" style="left:761.20px;top:893.00px;font-size:11.2px;color:#555;letter-spacing:-0.060px;">185.7 nm</span>
<span class="t" style="left:897.60px;top:893.00px;font-size:11.2px;color:#555;letter-spacing:0.474px;">958 nm</span>
<div style="left:463.00px;top:901.13px;width:670.20px;height:1.00px;background:#dedede;"></div>
<div style="left:463px;top:901px;width:155.6px;height:19px;overflow:hidden">
<span class="t" style="left:1.70px;top:10.00px;font-size:11.2px;color:#555;letter-spacing:-0.120px;">40 %</span>
</div>
<span class="t" style="left:624.80px;top:911.00px;font-size:11.2px;color:#555;letter-spacing:0.098px;">25.35 nm</span>
<span class="t" style="left:761.20px;top:911.00px;font-size:11.2px;color:#555;letter-spacing:-0.116px;">195.2 nm</span>
<span class="t" style="left:897.60px;top:911.00px;font-size:11.2px;color:#555;letter-spacing:0.214px;">1,000 nm</span>
<div style="left:463.00px;top:919.00px;width:670.20px;height:1.00px;background:#dedede;"></div>
<div style="left:463px;top:919px;width:155.6px;height:19px;overflow:hidden">
<span class="t" style="left:1.70px;top:10.00px;font-size:11.2px;color:#555;letter-spacing:-0.300px;">50 %</span>
</div>
<span class="t" style="left:624.80px;top:929.00px;font-size:11.2px;color:#555;letter-spacing:0.253px;">27.05 nm</span>
<span class="t" style="left:761.20px;top:929.00px;font-size:11.2px;color:#555;letter-spacing:0.361px;">204.5 nm</span>
<span class="t" style="left:897.60px;top:929.00px;font-size:11.2px;color:#555;letter-spacing:0.215px;">1,040 nm</span>
<div style="left:463.00px;top:936.87px;width:670.20px;height:1.00px;background:#dedede;"></div>
<div style="left:463px;top:937px;width:155.6px;height:19px;overflow:hidden">
<span class="t" style="left:1.70px;top:10.00px;font-size:11.2px;color:#555;letter-spacing:-0.266px;">60 %</span>
</div>
<span class="t" style="left:624.80px;top:947.00px;font-size:11.2px;color:#555;letter-spacing:0.284px;">28.9 nm</span>
<span class="t" style="left:761.20px;top:947.00px;font-size:11.2px;color:#555;letter-spacing:0.082px;">214 nm</span>
<span class="t" style="left:897.60px;top:947.00px;font-size:11.2px;color:#555;letter-spacing:0.043px;">1,082 nm</span>
<div style="left:463.00px;top:954.74px;width:670.20px;height:1.00px;background:#dedede;"></div>
<div style="left:463px;top:955px;width:155.6px;height:19px;overflow:hidden">
<span class="t" style="left:1.70px;top:9.00px;font-size:11.2px;color:#555;letter-spacing:-0.300px;">70 %</span>
</div>
<span class="t" style="left:624.80px;top:964.00px;font-size:11.2px;color:#555;letter-spacing:-0.300px;">31.1 nm</span>
<span class="t" style="left:761.20px;top:964.00px;font-size:11.2px;color:#555;letter-spacing:0.231px;">224.5 nm</span>
<span class="t" style="left:897.60px;top:964.00px;font-size:11.2px;color:#555;letter-spacing:-0.300px;">1,128 nm</span>
<div style="left:463.00px;top:972.61px;width:670.20px;height:1.00px;background:#dedede;"></div>
<div style="left:463px;top:973px;width:155.6px;height:19px;overflow:hidden">
<span class="t" style="left:1.70px;top:9.00px;font-size:11.2px;color:#555;letter-spacing:-0.203px;">80 %</span>
</div>
<span class="t" style="left:624.80px;top:982.00px;font-size:11.2px;color:#555;letter-spacing:0.536px;">34 nm</span>
<span class="t" style="left:761.20px;top:982.00px;font-size:11.2px;color:#555;letter-spacing:0.210px;">236.9 nm</span>
<span class="t" style="left:897.60px;top:982.00px;font-size:11.2px;color:#555;letter-spacing:-0.300px;">1,189 nm</span>
<div style="left:463.00px;top:990.48px;width:670.20px;height:1.00px;background:#dedede;"></div>
<div style="left:622.10px;top:848.02px;width:1.00px;height:142.96px;background:#d6d6d6;"></div>
<div style="left:758.50px;top:848.02px;width:1.00px;height:142.96px;background:#d6d6d6;"></div>
<div style="left:894.90px;top:848.02px;width:1.00px;height:142.96px;background:#d6d6d6;"></div>
<div style="left:1031.30px;top:848.02px;width:1.00px;height:142.96px;background:#d6d6d6;"></div>
<div style="left:1147.90px;top:577.00px;width:1.00px;height:417.50px;background:#dcdcdc;"></div>
<div style="left:1134.60px;top:686.40px;width:12.40px;height:12.40px;background:#fff;border:1px solid #d4d4d4;"></div>
<svg style="left:1136.80px;top:689.70px;" width="8" height="6" viewBox="0 0 8 6"><path d="M0.5 5 L4 1.2 L7.5 5 Z" fill="#222"/></svg>
<div style="left:1134.60px;top:698.40px;width:12.40px;height:57.00px;background:#fff;border:1px solid #d4d4d4;"></div>
<div style="left:1134.60px;top:979.30px;width:12.40px;height:12.40px;background:#fff;border:1px solid #d4d4d4;"></div>
<svg style="left:1136.80px;top:983.00px;" width="8" height="6" viewBox="0 0 8 6"><path d="M0.5 1 L4 4.8 L7.5 1 Z" fill="#222"/></svg>
<svg style="left:0.00px;top:0.00px;" width="1720" height="1000" viewBox="0 0 1720 1000"><rect x="1169.4" y="156.3" width="446.39999999999986" height="160.09999999999997" fill="#fff"/><rect x="1169.4" y="286.28" width="446.39999999999986" height="30.12" fill="#fafaf9"/><rect x="1169.4" y="226.04" width="446.39999999999986" height="30.12" fill="#fafaf9"/><rect x="1169.4" y="156.30" width="446.39999999999986" height="39.62" fill="#fafaf9"/><path d="M1173.5 286.28 H1614.8 M1173.5 256.16 H1614.8 M1173.5 226.04 H1614.8 M1173.5 195.92 H1614.8 M1173.5 165.80 H1614.8 M1174.0 158.8 V315.4 M1392.5 158.8 V315.4 M1611.2 158.8 V315.4 " stroke="#cdcdcd" stroke-width="1" stroke-dasharray="5.6 3.6" fill="none"/><path d="M1615.8 316.40 H1620.2 M1615.8 286.28 H1620.2 M1615.8 256.16 H1620.2 M1615.8 226.04 H1620.2 M1615.8 195.92 H1620.2 M1615.8 165.80 H1620.2 M1174.0 316.4 V320.4 M1392.5 316.4 V320.4 M1611.2 316.4 V320.4 " stroke="#cfcfcf" stroke-width="1" fill="none"/><rect x="1169.4" y="156.3" width="446.39999999999986" height="160.09999999999997" fill="none" stroke="#cfcfcf" stroke-width="1.2"/><polyline points="1174.00,312.13 1392.50,285.27 1611.20,157.07" fill="none" stroke="#4279c3" stroke-width="1.7" stroke-linejoin="round"/><rect x="1169.4" y="370.6" width="446.39999999999986" height="160.19999999999993" fill="#fff"/><rect x="1169.4" y="500.66" width="446.39999999999986" height="30.14" fill="#fafaf9"/><rect x="1169.4" y="440.38" width="446.39999999999986" height="30.14" fill="#fafaf9"/><rect x="1169.4" y="370.60" width="446.39999999999986" height="39.64" fill="#fafaf9"/><path d="M1173.5 500.66 H1614.8 M1173.5 470.52 H1614.8 M1173.5 440.38 H1614.8 M1173.5 410.24 H1614.8 M1173.5 380.10 H1614.8 M1174.0 373.1 V529.8 M1392.5 373.1 V529.8 M1611.2 373.1 V529.8 " stroke="#cdcdcd" stroke-width="1" stroke-dasharray="5.6 3.6" fill="none"/><path d="M1615.8 530.80 H1620.2 M1615.8 500.66 H1620.2 M1615.8 470.52 H1620.2 M1615.8 440.38 H1620.2 M1615.8 410.24 H1620.2 M1615.8 380.10 H1620.2 M1174.0 530.8 V534.8 M1392.5 530.8 V534.8 M1611.2 530.8 V534.8 " stroke="#cfcfcf" stroke-width="1" fill="none"/><rect x="1169.4" y="370.6" width="446.39999999999986" height="160.19999999999993" fill="none" stroke="#cfcfcf" stroke-width="1.2"/><polyline points="1174.00,527.28 1392.50,500.27 1611.20,371.36" fill="none" stroke="#c24a46" stroke-width="1.7" stroke-linejoin="round"/><rect x="1169.4" y="584.4" width="446.39999999999986" height="159.60000000000002" fill="#fff"/><rect x="1169.4" y="713.24" width="446.39999999999986" height="30.76" fill="#fafaf9"/><rect x="1169.4" y="651.72" width="446.39999999999986" height="30.76" fill="#fafaf9"/><rect x="1169.4" y="584.40" width="446.39999999999986" height="36.56" fill="#fafaf9"/><path d="M1173.5 713.24 H1614.8 M1173.5 682.48 H1614.8 M1173.5 651.72 H1614.8 M1173.5 620.96 H1614.8 M1173.5 590.20 H1614.8 M1174.0 586.9 V743.0 M1392.5 586.9 V743.0 M1611.2 586.9 V743.0 " stroke="#cdcdcd" stroke-width="1" stroke-dasharray="5.6 3.6" fill="none"/><path d="M1615.8 744.00 H1620.2 M1615.8 713.24 H1620.2 M1615.8 682.48 H1620.2 M1615.8 651.72 H1620.2 M1615.8 620.96 H1620.2 M1615.8 590.20 H1620.2 M1174.0 744.0 V748.0 M1392.5 744.0 V748.0 M1611.2 744.0 V748.0 " stroke="#cfcfcf" stroke-width="1" fill="none"/><rect x="1169.4" y="584.4" width="446.39999999999986" height="159.60000000000002" fill="none" stroke="#cfcfcf" stroke-width="1.2"/><polyline points="1174.00,740.60 1392.50,714.07 1611.20,585.12" fill="none" stroke="#94b856" stroke-width="1.7" stroke-linejoin="round"/><rect x="1169.4" y="797.3" width="446.39999999999986" height="160.20000000000005" fill="#fff"/><rect x="1169.4" y="926.88" width="446.39999999999986" height="30.62" fill="#fafaf9"/><rect x="1169.4" y="865.64" width="446.39999999999986" height="30.62" fill="#fafaf9"/><rect x="1169.4" y="797.30" width="446.39999999999986" height="37.72" fill="#fafaf9"/><path d="M1173.5 926.88 H1614.8 M1173.5 896.26 H1614.8 M1173.5 865.64 H1614.8 M1173.5 835.02 H1614.8 M1173.5 804.40 H1614.8 M1174.0 799.8 V956.5 M1392.5 799.8 V956.5 M1611.2 799.8 V956.5 " stroke="#cdcdcd" stroke-width="1" stroke-dasharray="5.6 3.6" fill="none"/><path d="M1615.8 957.50 H1620.2 M1615.8 926.88 H1620.2 M1615.8 896.26 H1620.2 M1615.8 865.64 H1620.2 M1615.8 835.02 H1620.2 M1615.8 804.40 H1620.2 M1174.0 957.5 V961.5 M1392.5 957.5 V961.5 M1611.2 957.5 V961.5 " stroke="#cfcfcf" stroke-width="1" fill="none"/><rect x="1169.4" y="797.3" width="446.39999999999986" height="160.20000000000005" fill="none" stroke="#cfcfcf" stroke-width="1.2"/><polyline points="1174.00,953.36 1392.50,926.19 1611.20,798.28" fill="none" stroke="#7f62a6" stroke-width="1.7" stroke-linejoin="round"/></svg>
<span class="t" style="left:1169.40px;top:141.00px;font-size:11.5px;color:#222;letter-spacing:0.231px;font-weight:bold;">Mittlerer Intensitätsdurchmesser (M</span>
<span class="t" style="left:1372.70px;top:144.00px;font-size:6.8px;color:#222;letter-spacing:0.100px;font-weight:bold;font-style:italic;">int</span>
<span class="t" style="left:1381.61px;top:141.00px;font-size:11.5px;color:#222;font-weight:bold;">)</span>
<span class="t" style="left:1625.40px;top:317.00px;font-size:12.7px;color:#555;letter-spacing:0.371px;">0,00</span>
<span class="t" style="left:1625.40px;top:287.00px;font-size:12.7px;color:#555;letter-spacing:0.627px;">200,00</span>
<span class="t" style="left:1625.40px;top:257.00px;font-size:12.7px;color:#555;letter-spacing:0.660px;">400,00</span>
<span class="t" style="left:1625.40px;top:227.00px;font-size:12.7px;color:#555;letter-spacing:0.627px;">600,00</span>
<span class="t" style="left:1625.40px;top:196.00px;font-size:12.7px;color:#555;letter-spacing:0.627px;">800,00</span>
<span class="t" style="left:1625.40px;top:166.00px;font-size:12.7px;color:#555;letter-spacing:0.109px;">1.000,00</span>
<div style="left:1693.6px;top:235.8px;width:0;height:0;transform:rotate(-90deg)"><span class="t" style="left:-20px;width:40px;text-align:center;top:0;font-size:12.5px;color:#666;letter-spacing:1.0px">(nm)</span></div>
<div style="left:1173.60px;top:322.60px;width:11.60px;height:14.80px;background:#00b2cd;"></div>
<span class="t" style="left:1176.22px;top:331.00px;font-size:12.5px;color:#fff;">1</span>
<div style="left:1385.90px;top:322.60px;width:14.40px;height:14.80px;background:#8b0000;"></div>
<span class="t" style="left:1389.92px;top:331.00px;font-size:12.5px;color:#fff;">2</span>
<div style="left:1604.30px;top:322.60px;width:14.40px;height:14.80px;background:#ff7f50;"></div>
<span class="t" style="left:1608.32px;top:331.00px;font-size:12.5px;color:#fff;">3</span>
<span class="t" style="left:1169.40px;top:355.00px;font-size:11.5px;color:#222;letter-spacing:0.190px;font-weight:bold;">Mittlerer Volumendurchmesser (M</span>
<span class="t" style="left:1360.70px;top:358.00px;font-size:7.8px;color:#222;letter-spacing:0.100px;font-weight:bold;">4,3</span>
<span class="t" style="left:1372.14px;top:355.00px;font-size:11.5px;color:#222;font-weight:bold;">)</span>
<span class="t" style="left:1625.40px;top:531.00px;font-size:12.7px;color:#555;letter-spacing:0.371px;">0,00</span>
<span class="t" style="left:1625.40px;top:501.00px;font-size:12.7px;color:#555;letter-spacing:0.627px;">200,00</span>
<span class="t" style="left:1625.40px;top:471.00px;font-size:12.7px;color:#555;letter-spacing:0.660px;">400,00</span>
<span class="t" style="left:1625.40px;top:441.00px;font-size:12.7px;color:#555;letter-spacing:0.627px;">600,00</span>
<span class="t" style="left:1625.40px;top:411.00px;font-size:12.7px;color:#555;letter-spacing:0.627px;">800,00</span>
<span class="t" style="left:1625.40px;top:381.00px;font-size:12.7px;color:#555;letter-spacing:0.109px;">1.000,00</span>
<div style="left:1693.6px;top:450.2px;width:0;height:0;transform:rotate(-90deg)"><span class="t" style="left:-20px;width:40px;text-align:center;top:0;font-size:12.5px;color:#666;letter-spacing:1.0px">(nm)</span></div>
<div style="left:1173.60px;top:537.00px;width:11.60px;height:14.80px;background:#00b2cd;"></div>
<span class="t" style="left:1176.22px;top:545.00px;font-size:12.5px;color:#fff;">1</span>
<div style="left:1385.90px;top:537.00px;width:14.40px;height:14.80px;background:#8b0000;"></div>
<span class="t" style="left:1389.92px;top:545.00px;font-size:12.5px;color:#fff;">2</span>
<div style="left:1604.30px;top:537.00px;width:14.40px;height:14.80px;background:#ff7f50;"></div>
<span class="t" style="left:1608.32px;top:545.00px;font-size:12.5px;color:#fff;">3</span>
<span class="t" style="left:1169.40px;top:569.00px;font-size:11.5px;color:#222;letter-spacing:0.215px;font-weight:bold;">Mittlerer Flächendurchmesser (M</span>
<span class="t" style="left:1357.20px;top:572.00px;font-size:7.8px;color:#222;letter-spacing:0.100px;font-weight:bold;">3,2</span>
<span class="t" style="left:1368.64px;top:569.00px;font-size:11.5px;color:#222;font-weight:bold;">)</span>
<span class="t" style="left:1625.40px;top:745.00px;font-size:12.7px;color:#555;letter-spacing:0.371px;">0,00</span>
<span class="t" style="left:1625.40px;top:714.00px;font-size:12.7px;color:#555;letter-spacing:0.627px;">200,00</span>
<span class="t" style="left:1625.40px;top:683.00px;font-size:12.7px;color:#555;letter-spacing:0.660px;">400,00</span>
<span class="t" style="left:1625.40px;top:652.00px;font-size:12.7px;color:#555;letter-spacing:0.627px;">600,00</span>
<span class="t" style="left:1625.40px;top:621.00px;font-size:12.7px;color:#555;letter-spacing:0.627px;">800,00</span>
<span class="t" style="left:1625.40px;top:591.00px;font-size:12.7px;color:#555;letter-spacing:0.109px;">1.000,00</span>
<div style="left:1693.6px;top:663.7px;width:0;height:0;transform:rotate(-90deg)"><span class="t" style="left:-20px;width:40px;text-align:center;top:0;font-size:12.5px;color:#666;letter-spacing:1.0px">(nm)</span></div>
<div style="left:1173.60px;top:750.20px;width:11.60px;height:14.80px;background:#00b2cd;"></div>
<span class="t" style="left:1176.22px;top:758.00px;font-size:12.5px;color:#fff;">1</span>
<div style="left:1385.90px;top:750.20px;width:14.40px;height:14.80px;background:#8b0000;"></div>
<span class="t" style="left:1389.92px;top:758.00px;font-size:12.5px;color:#fff;">2</span>
<div style="left:1604.30px;top:750.20px;width:14.40px;height:14.80px;background:#ff7f50;"></div>
<span class="t" style="left:1608.32px;top:758.00px;font-size:12.5px;color:#fff;">3</span>
<span class="t" style="left:1169.40px;top:782.00px;font-size:11.5px;color:#222;letter-spacing:-0.012px;font-weight:bold;">Perzentil Q(x)= 50 %</span>
<span class="t" style="left:1625.40px;top:958.00px;font-size:12.7px;color:#555;letter-spacing:0.371px;">0,00</span>
<span class="t" style="left:1625.40px;top:927.00px;font-size:12.7px;color:#555;letter-spacing:0.627px;">200,00</span>
<span class="t" style="left:1625.40px;top:897.00px;font-size:12.7px;color:#555;letter-spacing:0.660px;">400,00</span>
<span class="t" style="left:1625.40px;top:866.00px;font-size:12.7px;color:#555;letter-spacing:0.627px;">600,00</span>
<span class="t" style="left:1625.40px;top:836.00px;font-size:12.7px;color:#555;letter-spacing:0.627px;">800,00</span>
<span class="t" style="left:1625.40px;top:805.00px;font-size:12.7px;color:#555;letter-spacing:0.109px;">1.000,00</span>
<div style="left:1693.6px;top:876.9px;width:0;height:0;transform:rotate(-90deg)"><span class="t" style="left:-20px;width:40px;text-align:center;top:0;font-size:12.5px;color:#666;letter-spacing:1.0px">(nm)</span></div>
<div style="left:1173.60px;top:963.70px;width:11.60px;height:14.80px;background:#00b2cd;"></div>
<span class="t" style="left:1176.22px;top:972.00px;font-size:12.5px;color:#fff;">1</span>
<div style="left:1385.90px;top:963.70px;width:14.40px;height:14.80px;background:#8b0000;"></div>
<span class="t" style="left:1389.92px;top:972.00px;font-size:12.5px;color:#fff;">2</span>
<div style="left:1604.30px;top:963.70px;width:14.40px;height:14.80px;background:#ff7f50;"></div>
<span class="t" style="left:1608.32px;top:972.00px;font-size:12.5px;color:#fff;">3</span>
<svg style="left:0.00px;top:0.00px;overflow:hidden" width="1720" height="28" viewBox="0 0 1720 28"><path d="M304.3 5 H309 L311 7 V13 H304.3 Z" fill="#f4f6fa" stroke="#c9d3e0" stroke-width="0.8"/><path d="M305.5 8 h3.5 M305.5 10.3 h3.5" stroke="#8fb4e8" stroke-width="0.9"/><path d="M308.6 8.6 H313.3 L315.5 10.8 V16.2 H308.6 Z" fill="#f6f8fb" stroke="#c5cfdc" stroke-width="0.8"/><path d="M310 11.5 h4 M310 13.5 h4" stroke="#7ea9e4" stroke-width="0.9"/><rect x="476.6" y="-1" width="14.8" height="11.6" rx="1" fill="#c9c9c9" stroke="#a9a9a9" stroke-width="1"/><rect x="478.6" y="1" width="10.8" height="7.4" fill="#b9b9b9"/><rect x="476.2" y="12.3" width="15.6" height="3.4" rx="0.6" fill="#c4c4c4" stroke="#a5a5a5" stroke-width="0.8"/><path d="M484 15.8 V19.8 M473.9 20.1 H482 M486 20.1 H493.5" stroke="#ababab" stroke-width="1"/><rect x="482.2" y="18.8" width="3.6" height="2.4" fill="#a8a8a8"/><path d="M519.6 7.5 V1.2 H501.9 V20.3 H519.6 V14.5" fill="none" stroke="#333" stroke-width="1.5"/><path d="M510.3 11 H528.4 M523.8 6.3 L528.8 11 L523.8 15.7" fill="none" stroke="#333" stroke-width="1.5"/><rect x="542.5" y="-1" width="13" height="3.2" fill="#333"/><path d="M539.5 4.7 H558.8 A2.5 2.5 0 0 1 561.3 7.2 V15.7 H537 V7.2 A2.5 2.5 0 0 1 539.5 4.7 Z" fill="#333"/><rect x="543.4" y="12.5" width="11.4" height="7.8" fill="#f1f1f1" stroke="#333" stroke-width="1.5"/><circle cx="557.6" cy="7.8" r="0.9" fill="#eee"/><path d="M1125.7 4.9 V13.6 A1.5 1.7 0 0 0 1128.7 13.6 V9.3 A2.9 3.4 0 0 1 1134.5 9.3" fill="none" stroke="#444" stroke-width="1.25" stroke-linecap="round"/><path d="M1131.5 13.2 A3.05 3.2 0 1 1 1137.5 13.2 Z" fill="none" stroke="#444" stroke-width="1.2"/><rect x="1132.4" y="13.3" width="4.3" height="3.2" fill="none" stroke="#444" stroke-width="1.2"/><path d="M1132.6 11.3 H1136.6" stroke="#444" stroke-width="1.1"/><rect x="1450.2" y="5" width="5.6" height="5.2" rx="0.8" fill="#333"/><rect x="1450.2" y="11.6" width="5.6" height="5.2" rx="0.8" fill="#333"/><rect x="1457.4" y="11.6" width="5.6" height="5.2" rx="0.8" fill="#333"/><path d="M1460.3 4.3 L1463.5 7.5 L1460.3 10.7 L1457.1 7.5 Z" fill="#333"/><circle cx="1563.7" cy="10.7" r="5.9" fill="none" stroke="#444" stroke-width="1.2"/><text x="1561.3" y="13.9" font-size="8.6" font-weight="bold" fill="#444">?</text><path d="M1634 10.7 H1648" stroke="#222" stroke-width="1.9"/><path d="M1669.4 6.9 V4.7 H1679.7 V14 H1677.6" fill="none" stroke="#444" stroke-width="1"/><rect x="1667.1" y="6.9" width="10.4" height="9.3" fill="none" stroke="#444" stroke-width="1.1"/><path d="M1699.7 4.9 L1711.8 16.8 M1711.8 4.9 L1699.7 16.8" stroke="#444" stroke-width="1.1"/></svg>
<div style="left:1574.00px;top:1000.00px;width:36.00px;height:39.00px;background:#00b2cd;"></div>
<svg style="left:0.00px;top:0.00px;overflow:hidden" width="1720" height="1040" viewBox="0 0 1720 1040"><path d="M1579.4 1007.2 H1601.6000000000001 V1029.0 H1582.6000000000001 L1579.4 1025.6 Z" fill="#dcb3f2" stroke="#b14fe0" stroke-width="1.1" stroke-linejoin="round"/><rect x="1583.8400000000001" y="1007.2" width="13.319999999999999" height="9.156" fill="#fff" stroke="#b14fe0" stroke-width="1"/><rect x="1586.0600000000002" y="1021.5880000000001" width="9.767999999999999" height="7.412000000000001" fill="#fff" stroke="#b14fe0" stroke-width="1"/><rect x="1587.836" y="1023.768" width="1.2" height="3.27" fill="#555"/><circle cx="1598.6" cy="1026" r="5.7" fill="#2fc14a"/><path d="M1595.6 1026.2 L1597.8 1028.4 L1601.7 1023.8" fill="none" stroke="#fff" stroke-width="1.4"/><path d="M1615.2 1007.2 H1640.0 V1031.6000000000001 H1618.4 L1615.2 1028.2 Z" fill="#dcb3f2" stroke="#b14fe0" stroke-width="1.1" stroke-linejoin="round"/><rect x="1620.16" y="1007.2" width="14.879999999999999" height="10.248" fill="#fff" stroke="#b14fe0" stroke-width="1"/><rect x="1622.64" y="1023.3040000000001" width="10.912" height="8.296" fill="#fff" stroke="#b14fe0" stroke-width="1"/><rect x="1624.624" y="1025.7440000000001" width="1.2" height="3.6599999999999997" fill="#555"/><rect x="1651" y="1006.2" width="24.8" height="11.6" fill="#fff" stroke="#333" stroke-width="0.9"/><path d="M1651.4 1017.6 V1012.6 L1654 1010.6 L1657.5 1013.4 L1659.6 1012 L1662.5 1014 L1666 1010.8 L1669.5 1013.6 L1671.5 1012 L1675.4 1015 V1017.6 Z" fill="#2b2b2b"/><circle cx="1673" cy="1008.8" r="1.1" fill="#222"/><rect x="1651.6" y="1020.6" width="9" height="10.6" fill="none" stroke="#222" stroke-width="1.1" stroke-dasharray="1.6 1.9"/><path d="M1665 1024.2 H1671.5 A3.3 3.3 0 0 1 1671.5 1030.8 H1669.5 M1667.7 1021.5 L1664.8 1024.2 L1667.7 1026.9" fill="none" stroke="#1a7cff" stroke-width="1.3"/><rect x="1687" y="1006.2" width="24.8" height="11.6" fill="#fff" stroke="#333" stroke-width="0.9"/><path d="M1687.4 1017.6 V1012.6 L1690 1010.6 L1693.5 1013.4 L1695.6 1012 L1698.5 1014 L1702 1010.8 L1705.5 1013.6 L1707.5 1012 L1711.4 1015 V1017.6 Z" fill="#2b2b2b"/><circle cx="1709" cy="1008.8" r="1.1" fill="#222"/><rect x="1687.6" y="1020.6" width="9" height="10.6" fill="none" stroke="#222" stroke-width="1.1" stroke-dasharray="1.6 1.9"/><path d="M1711 1024.2 H1704.5 A3.3 3.3 0 0 0 1704.5 1030.8 H1706.5 M1708.3 1021.5 L1711.2 1024.2 L1708.3 1026.9" fill="none" stroke="#1a7cff" stroke-width="1.3"/></svg>
<div style="left:0px;top:68px;width:1720px;height:4px;background:#00b2cd;"></div>
<div style="left:0px;top:67px;width:1720px;height:1px;background:#00b2cd;opacity:0.30;"></div>
<div style="left:35px;top:70px;width:4px;height:969px;background:#00b2cd;"></div>
<div style="left:39px;top:70px;width:1px;height:969px;background:#00b2cd;opacity:0.80;"></div>
<div style="left:416px;top:70px;width:4px;height:926px;background:#00b2cd;"></div>
<div style="left:415px;top:70px;width:1px;height:926px;background:#00b2cd;opacity:0.40;"></div>
<div style="left:420px;top:70px;width:1px;height:926px;background:#00b2cd;opacity:0.40;"></div>
<div style="left:1150px;top:70px;width:4px;height:926px;background:#00b2cd;"></div>
<div style="left:1154px;top:70px;width:1px;height:926px;background:#00b2cd;opacity:0.20;"></div>
<div style="left:37px;top:995px;width:1683px;height:3px;background:#00b2cd;"></div>
<div style="left:37px;top:994px;width:1683px;height:1px;background:#00b2cd;opacity:0.60;"></div>
<div style="left:37px;top:998px;width:1683px;height:1px;background:#00b2cd;opacity:0.50;"></div>
<div style="left:418px;top:507px;width:734px;height:4px;background:#00b2cd;"></div>
<div style="left:418px;top:506px;width:734px;height:1px;background:#00b2cd;opacity:0.20;"></div>
<div style="left:418px;top:511px;width:734px;height:1px;background:#00b2cd;opacity:0.40;"></div>
<div style="left:38px;top:697px;width:380px;height:3px;background:#00b2cd;"></div>
<div style="left:38px;top:696px;width:380px;height:1px;background:#00b2cd;opacity:0.30;"></div>
<div style="left:38px;top:700px;width:380px;height:1px;background:#00b2cd;opacity:0.80;"></div>
<svg style="left:218.00px;top:696.70px;" width="22" height="4.4" viewBox="0 0 22 4.4"><circle cx="3.1" cy="2.2" r="1.4" fill="#f2fbfd"/><circle cx="10.3" cy="2.2" r="1.4" fill="#f2fbfd"/><circle cx="17.6" cy="2.2" r="1.4" fill="#f2fbfd"/></svg>
</div></body></html>
